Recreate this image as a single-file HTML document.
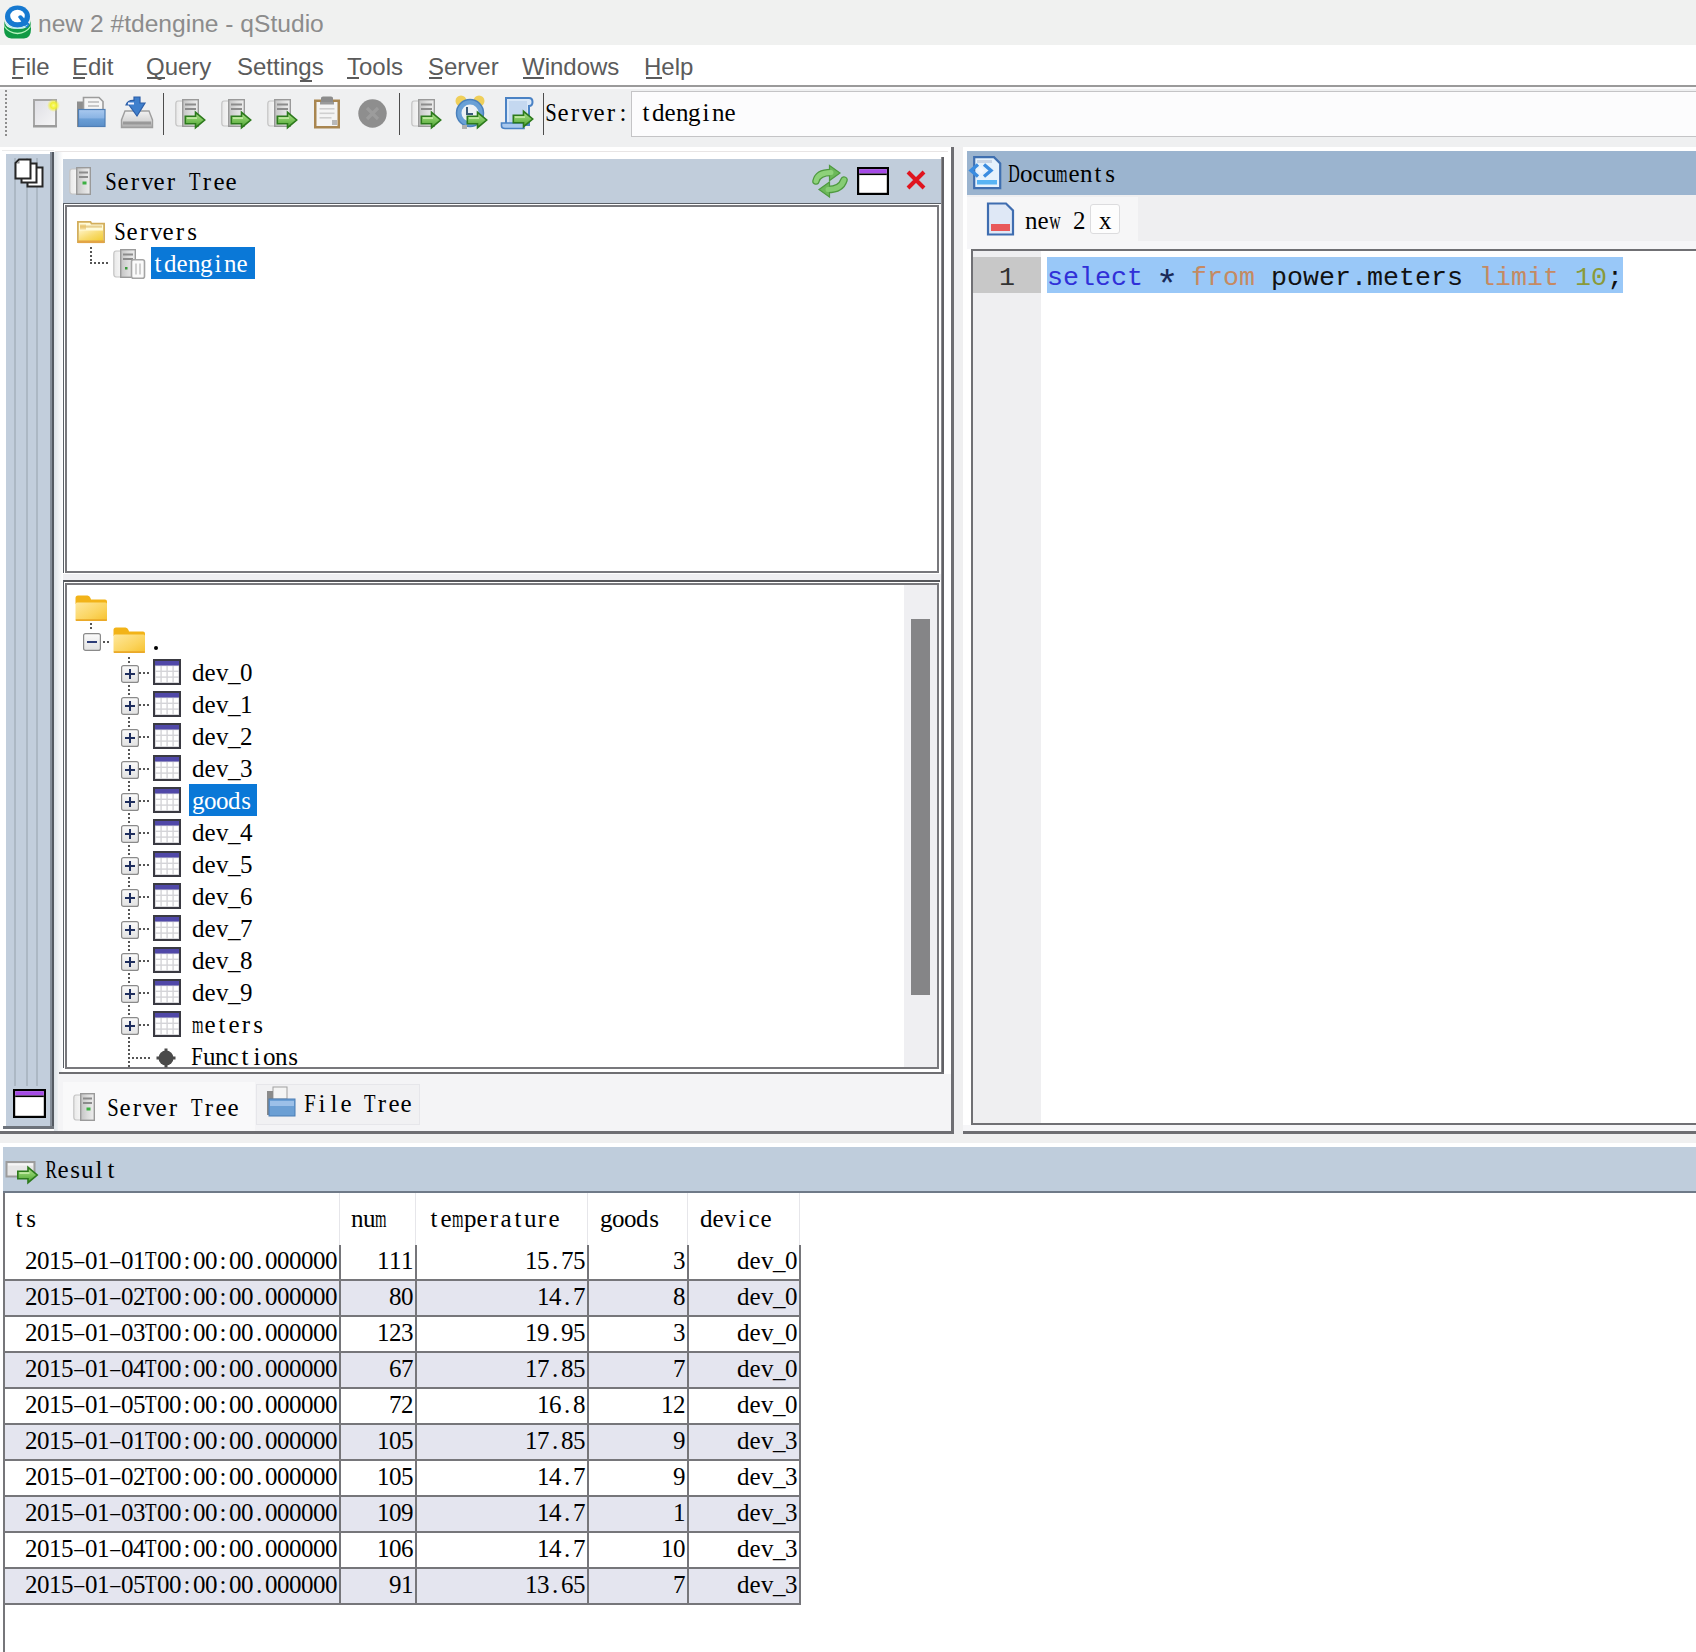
<!DOCTYPE html><html><head><meta charset="utf-8"><style>
html,body{margin:0;padding:0;}
body{width:1696px;height:1652px;position:relative;overflow:hidden;background:#ffffff;}
body div, body svg{position:absolute;box-sizing:border-box;}
.sans{font-family:"Liberation Sans",sans-serif;font-size:24px;line-height:28px;white-space:pre;}
.ss{font-family:"Liberation Serif",serif;font-size:25px;line-height:28px;white-space:pre;color:#000;}
.ss b{font-weight:normal;}
.w{display:inline-block;width:12px;text-align:center;}
.n{display:inline-block;}
.code{font-family:"Liberation Mono",monospace;font-size:26.667px;line-height:32px;white-space:pre;}
</style></head><body>

<svg width="0" height="0" style="position:absolute;left:0;top:0"><defs>
<linearGradient id="gArrow" x1="0" y1="0" x2="0" y2="1"><stop offset="0" stop-color="#b2e08e"/><stop offset=".55" stop-color="#78c258"/><stop offset="1" stop-color="#4c9e34"/></linearGradient>
<linearGradient id="gGhost" x1="0" y1="0" x2="1" y2="0"><stop offset="0" stop-color="#e8e8e8"/><stop offset="1" stop-color="#f8f8f8"/></linearGradient>
<linearGradient id="gSrv" x1="0" y1="0" x2="1" y2="0"><stop offset="0" stop-color="#c4c4c4"/><stop offset=".5" stop-color="#dcdcdc"/><stop offset="1" stop-color="#eeeeee"/></linearGradient>
<linearGradient id="gNew" x1="0" y1="0" x2="1" y2="1"><stop offset="0" stop-color="#dedee4"/><stop offset="1" stop-color="#f6f6f6"/></linearGradient>
<radialGradient id="gGlow"><stop offset="0" stop-color="#fafa90"/><stop offset=".45" stop-color="#f0f030"/><stop offset="1" stop-color="#f4f050" stop-opacity="0"/></radialGradient>
<linearGradient id="gFold" x1="0" y1="0" x2="0" y2="1"><stop offset="0" stop-color="#a9c9ef"/><stop offset=".5" stop-color="#8ab4e4"/><stop offset=".55" stop-color="#6a9ed6"/><stop offset="1" stop-color="#5b8fc8"/></linearGradient>
<linearGradient id="gTray" x1="0" y1="0" x2="0" y2="1"><stop offset="0" stop-color="#f2f2f2"/><stop offset=".6" stop-color="#d6d6d6"/><stop offset="1" stop-color="#a8a8a8"/></linearGradient>
<linearGradient id="gYel" x1="0" y1="0" x2="1" y2="1"><stop offset="0" stop-color="#fff2c0"/><stop offset=".5" stop-color="#f8dc70"/><stop offset="1" stop-color="#f2cc30"/></linearGradient>
<linearGradient id="gFolder" x1="0" y1="0" x2="1" y2="1"><stop offset="0" stop-color="#fee79c"/><stop offset=".6" stop-color="#fbd45e"/><stop offset="1" stop-color="#f6c12e"/></linearGradient>
<linearGradient id="gHdr" x1="0" y1="0" x2="0" y2="1"><stop offset="0" stop-color="#fbfbfb"/><stop offset="1" stop-color="#e2e2e2"/></linearGradient>
</defs></svg>
<div style="left:0px;top:0px;width:1696px;height:45px;background:#f0f1f0;"></div>
<svg style="left:0px;top:0px" width="40" height="44" viewBox="0 0 40 44"><path d="M4 26 Q17.5 37 31 26 L31 29 Q31 38 24 38.5 H11.5 Q4 38 4 29 Z" fill="#109a45"/>
<path d="M4 20 Q4 31 17.5 32 Q31 31 31 20 Q31 29 17.5 29 Q4 29 4 20 Z" fill="#139c48"/>
<path d="M4.5 20 Q5 30 17.5 31 Q30 30 30.5 20 L30.5 26 Q29 33 17.5 33.5 Q6 33 4.5 26 Z" fill="#139c48"/>
<path d="M4.5 26.5 Q9 33 17.5 33.5 Q26 33 30.5 26.5" fill="none" stroke="#b8f5c0" stroke-width="1.3"/>
<ellipse cx="17.5" cy="16.5" rx="12.5" ry="11" fill="#1679d0"/>
<ellipse cx="17.5" cy="16" rx="7.3" ry="6.3" fill="#ffffff"/>
<path d="M18 17 Q19 14.5 21.5 15.5 L29.5 24 Q28.5 27.5 26 28 Z" fill="#1679d0"/>
<path d="M5.5 22.5 Q9 28 17.5 28.5 Q24 28.5 27.5 25" fill="none" stroke="#a8f0f0" stroke-width="1"/></svg>
<div class="sans" style="left:38px;top:10px;color:#8c8c8c;font-size:24.6px;">new 2 #tdengine - qStudio</div>
<div style="left:0px;top:45px;width:1696px;height:40px;background:#ffffff;"></div>
<div style="left:0px;top:85px;width:1696px;height:2px;background:#9a9a9a;"></div>
<div class="sans" style="left:11px;top:53px;color:#5b5b5b;">File</div>
<div class="sans" style="left:72px;top:53px;color:#5b5b5b;">Edit</div>
<div class="sans" style="left:146px;top:53px;color:#5b5b5b;">Query</div>
<div class="sans" style="left:237px;top:53px;color:#5b5b5b;">Settings</div>
<div class="sans" style="left:347px;top:53px;color:#5b5b5b;">Tools</div>
<div class="sans" style="left:428px;top:53px;color:#5b5b5b;">Server</div>
<div class="sans" style="left:522px;top:53px;color:#5b5b5b;">Windows</div>
<div class="sans" style="left:644px;top:53px;color:#5b5b5b;">Help</div>
<div style="left:12px;top:77px;width:11px;height:2px;background:#5b5b5b;"></div>
<div style="left:73px;top:77px;width:12px;height:2px;background:#5b5b5b;"></div>
<div style="left:147px;top:77px;width:18px;height:2px;background:#5b5b5b;"></div>
<div style="left:300px;top:80px;width:12px;height:2px;background:#5b5b5b;"></div>
<div style="left:347px;top:77px;width:12px;height:2px;background:#5b5b5b;"></div>
<div style="left:429px;top:77px;width:13px;height:2px;background:#5b5b5b;"></div>
<div style="left:523px;top:77px;width:21px;height:2px;background:#5b5b5b;"></div>
<div style="left:646px;top:77px;width:16px;height:2px;background:#5b5b5b;"></div>
<div style="left:0px;top:87px;width:1696px;height:60px;background:#eff0f1;"></div>
<div style="left:0px;top:87px;width:1696px;height:2px;background:#fbfbfc;"></div>
<div style="left:5px;top:90px;width:2px;height:2px;background:#8e8e8e;"></div>
<div style="left:5px;top:94px;width:2px;height:2px;background:#8e8e8e;"></div>
<div style="left:5px;top:98px;width:2px;height:2px;background:#8e8e8e;"></div>
<div style="left:5px;top:102px;width:2px;height:2px;background:#8e8e8e;"></div>
<div style="left:5px;top:106px;width:2px;height:2px;background:#8e8e8e;"></div>
<div style="left:5px;top:110px;width:2px;height:2px;background:#8e8e8e;"></div>
<div style="left:5px;top:114px;width:2px;height:2px;background:#8e8e8e;"></div>
<div style="left:5px;top:118px;width:2px;height:2px;background:#8e8e8e;"></div>
<div style="left:5px;top:122px;width:2px;height:2px;background:#8e8e8e;"></div>
<div style="left:5px;top:126px;width:2px;height:2px;background:#8e8e8e;"></div>
<div style="left:5px;top:130px;width:2px;height:2px;background:#8e8e8e;"></div>
<div style="left:5px;top:134px;width:2px;height:2px;background:#8e8e8e;"></div>
<div style="left:163px;top:93px;width:1px;height:42px;background:#4c4c4c;"></div>
<div style="left:399px;top:93px;width:1px;height:42px;background:#4c4c4c;"></div>
<div style="left:543px;top:93px;width:1px;height:42px;background:#4c4c4c;"></div>
<div style="left:631px;top:91px;width:1070px;height:46px;background:#fcfcfd;border:1px solid #c4c4c6;"></div>
<div class="ss" style="left:545px;top:99px;"><b class="w"><b class="n" style="width:13.90px;margin-left:-0.95px;transform:scaleX(0.827)">S</b></b><b class="w">e</b><b class="w">r</b><b class="w">v</b><b class="w">e</b><b class="w">r</b><b class="w">:</b></div>
<div class="ss" style="left:640px;top:99px;"><b class="w">t</b><b class="w">d</b><b class="w">e</b><b class="w">n</b><b class="w">g</b><b class="w">i</b><b class="w">n</b><b class="w">e</b></div>
<svg style="left:32px;top:97px" width="30" height="32" viewBox="0 0 30 32"><rect x="2" y="3" width="22" height="26" fill="url(#gNew)" stroke="#a6a6a6" stroke-width="2"/><rect x="1" y="28" width="24" height="2.5" fill="#9c9c9c"/><circle cx="21.5" cy="8.5" r="6.5" fill="url(#gGlow)"/></svg>
<svg style="left:76px;top:96px" width="32" height="32" viewBox="0 0 32 32"><rect x="1" y="5.5" width="7" height="25.5" fill="#8e8e8e"/><path d="M7.5 1.5 H23 L27 5.5 V14 H7.5 Z" fill="#f6f6f6" stroke="#9c9c9c" stroke-width="1.6"/><rect x="12" y="5" width="11" height="2" fill="#c8c8c8"/><rect x="12" y="9" width="11" height="2" fill="#c8c8c8"/><rect x="2.5" y="13.5" width="26.5" height="17" fill="url(#gFold)" stroke="#4f7fb6" stroke-width="1.2"/></svg>
<svg style="left:120px;top:96px" width="34" height="34" viewBox="0 0 34 34"><path d="M5 15 H29 L32.5 24 V31.5 H1.5 V24 Z" fill="url(#gTray)" stroke="#9e9e9e" stroke-width="1.4"/><rect x="3" y="25.5" width="28" height="3" fill="#8a8a8a" opacity=".75"/><path d="M6 9 Q8 4 14 4.5 V1 L20 1 V7 H25 L17 20 L9 9 Z" fill="#3f7fcc" stroke="#2c5ea8" stroke-width="1.2"/><rect x="8" y="6.5" width="6" height="2" fill="#f4f4ff"/></svg>
<svg style="left:174px;top:98px" width="32" height="32" viewBox="0 0 32 32"><path d="M4 3 H10 V28 H4 Q1.8 28 1.8 25 V6 Q1.8 3 4 3 Z" fill="url(#gGhost)" stroke="#c4c4c4" stroke-width="1.2"/><rect x="8.7" y="1.7" width="15.6" height="26.6" fill="url(#gSrv)" stroke="#9a9a9a" stroke-width="1.4"/><rect x="11" y="5.5" width="11" height="2" fill="#8c8c8c"/><rect x="11" y="10" width="11" height="2" fill="#8c8c8c"/><g transform="translate(10.5,13.5) scale(1.0)"><path d="M0.8 4.8 H11 V0.8 L20.2 8.5 L11 16.2 V12.2 H0.8 Z" fill="url(#gArrow)" stroke="#2c7a1c" stroke-width="1.6" stroke-linejoin="miter"/><path d="M2.5 6.6 H12.5" stroke="#c4eaa8" stroke-width="1.6"/></g></svg>
<svg style="left:220px;top:98px" width="32" height="32" viewBox="0 0 32 32"><path d="M4 3 H10 V28 H4 Q1.8 28 1.8 25 V6 Q1.8 3 4 3 Z" fill="url(#gGhost)" stroke="#c4c4c4" stroke-width="1.2"/><rect x="8.7" y="1.7" width="15.6" height="26.6" fill="url(#gSrv)" stroke="#9a9a9a" stroke-width="1.4"/><rect x="11" y="5.5" width="11" height="2" fill="#8c8c8c"/><rect x="11" y="10" width="11" height="2" fill="#8c8c8c"/><g transform="translate(10.5,13.5) scale(1.0)"><path d="M0.8 4.8 H11 V0.8 L20.2 8.5 L11 16.2 V12.2 H0.8 Z" fill="url(#gArrow)" stroke="#2c7a1c" stroke-width="1.6" stroke-linejoin="miter"/><path d="M2.5 6.6 H12.5" stroke="#c4eaa8" stroke-width="1.6"/></g></svg>
<svg style="left:266px;top:98px" width="32" height="32" viewBox="0 0 32 32"><path d="M4 3 H10 V28 H4 Q1.8 28 1.8 25 V6 Q1.8 3 4 3 Z" fill="url(#gGhost)" stroke="#c4c4c4" stroke-width="1.2"/><rect x="8.7" y="1.7" width="15.6" height="26.6" fill="url(#gSrv)" stroke="#9a9a9a" stroke-width="1.4"/><rect x="11" y="5.5" width="11" height="2" fill="#8c8c8c"/><rect x="11" y="10" width="11" height="2" fill="#8c8c8c"/><g transform="translate(10.5,13.5) scale(1.0)"><path d="M0.8 4.8 H11 V0.8 L20.2 8.5 L11 16.2 V12.2 H0.8 Z" fill="url(#gArrow)" stroke="#2c7a1c" stroke-width="1.6" stroke-linejoin="miter"/><path d="M2.5 6.6 H12.5" stroke="#c4eaa8" stroke-width="1.6"/></g></svg>
<svg style="left:312px;top:96px" width="30" height="34" viewBox="0 0 30 34"><rect x="2" y="3.5" width="26" height="29" fill="#a98650" /><rect x="4.5" y="6" width="21" height="24" fill="#f4f4f4"/><path d="M9 2 Q9 0.5 11 0.5 H19 Q21 0.5 21 2 V6 H9 Z" fill="#8c8c8c"/><rect x="8" y="6" width="14" height="2.5" fill="#9a9a9a"/><rect x="7.5" y="12" width="15" height="1.6" fill="#cfcfcf"/><rect x="7.5" y="16.5" width="15" height="1.6" fill="#cfcfcf"/><rect x="7.5" y="21" width="12" height="1.6" fill="#cfcfcf"/><rect x="20" y="24" width="5" height="5" fill="#b8b8b8"/></svg>
<svg style="left:358px;top:98px" width="30" height="32" viewBox="0 0 30 32"><circle cx="14.5" cy="15.5" r="14.2" fill="#8e8e8e"/><path d="M9 10 L20 21 M20 10 L9 21" stroke="#9c9c9c" stroke-width="3.2"/></svg>
<svg style="left:410px;top:98px" width="32" height="32" viewBox="0 0 32 32"><path d="M4 3 H10 V28 H4 Q1.8 28 1.8 25 V6 Q1.8 3 4 3 Z" fill="url(#gGhost)" stroke="#c4c4c4" stroke-width="1.2"/><rect x="8.7" y="1.7" width="15.6" height="26.6" fill="url(#gSrv)" stroke="#9a9a9a" stroke-width="1.4"/><rect x="11" y="5.5" width="11" height="2" fill="#8c8c8c"/><rect x="11" y="10" width="11" height="2" fill="#8c8c8c"/><g transform="translate(10.5,13.5) scale(1.0)"><path d="M0.8 4.8 H11 V0.8 L20.2 8.5 L11 16.2 V12.2 H0.8 Z" fill="url(#gArrow)" stroke="#2c7a1c" stroke-width="1.6" stroke-linejoin="miter"/><path d="M2.5 6.6 H12.5" stroke="#c4eaa8" stroke-width="1.6"/></g></svg>
<svg style="left:454px;top:95px" width="34" height="35" viewBox="0 0 34 35"><circle cx="7" cy="6" r="5.5" fill="#efcf5a"/><circle cx="25" cy="6" r="5.5" fill="#efcf5a"/><circle cx="16" cy="18" r="13.5" fill="#6aa0d6" stroke="#4a80bc" stroke-width="1.5"/><circle cx="16" cy="18" r="8.5" fill="#eef2f6"/><path d="M13 12 v7 h6" stroke="#3a5a7a" stroke-width="2" fill="none"/><rect x="8" y="30" width="5" height="4" fill="#b0b0b0"/><g transform="translate(12.5,16.5) scale(1.0)"><path d="M0.8 4.8 H11 V0.8 L20.2 8.5 L11 16.2 V12.2 H0.8 Z" fill="url(#gArrow)" stroke="#2c7a1c" stroke-width="1.6" stroke-linejoin="miter"/><path d="M2.5 6.6 H12.5" stroke="#c4eaa8" stroke-width="1.6"/></g></svg>
<svg style="left:500px;top:96px" width="34" height="34" viewBox="0 0 34 34"><path d="M6 2 H29 Q32.5 2 32.5 6 Q32.5 10 29 10 V29 H6 Z" fill="#dae8f8" stroke="#4a82c4" stroke-width="2"/><path d="M9 5 H27 V27 H9 Z" fill="#c4d8f0"/><path d="M1.5 27 H24 V32.5 H5 Q1.5 32.5 1.5 30 Z" fill="#a8c8ee" stroke="#4a82c4" stroke-width="1.6"/><g transform="translate(12.5,14.5) scale(1.0)"><path d="M0.8 4.8 H11 V0.8 L20.2 8.5 L11 16.2 V12.2 H0.8 Z" fill="url(#gArrow)" stroke="#2c7a1c" stroke-width="1.6" stroke-linejoin="miter"/><path d="M2.5 6.6 H12.5" stroke="#c4eaa8" stroke-width="1.6"/></g></svg>
<div style="left:0px;top:147px;width:954px;height:987px;background:#ffffff;"></div>
<div style="left:954px;top:147px;width:9px;height:987px;background:#efeff0;"></div>
<div style="left:963px;top:147px;width:733px;height:987px;background:#ffffff;"></div>
<div style="left:2px;top:150px;width:52px;height:1px;background:#ebebeb;"></div>
<div style="left:54px;top:152px;width:9px;height:980px;background:linear-gradient(to right,#dde3e8,#ffffff);"></div>
<div style="left:55px;top:151px;width:893px;height:1px;background:#e8e5e5;"></div>
<div style="left:6px;top:154px;width:44px;height:972px;background:#c2cedc;"></div>
<div style="left:14px;top:158px;width:2px;height:928px;background:#acb8c4;"></div>
<div style="left:26px;top:158px;width:2px;height:928px;background:#acb8c4;"></div>
<div style="left:36px;top:158px;width:2px;height:928px;background:#acb8c4;"></div>
<div style="left:50px;top:152px;width:2px;height:977px;background:#868f9a;"></div>
<div style="left:52px;top:152px;width:2px;height:977px;background:#545a62;"></div>
<div style="left:3px;top:1126px;width:51px;height:3px;background:#6d737b;"></div>
<svg style="left:14px;top:158px" width="32" height="32" viewBox="0 0 32 32"><rect x="13.5" y="9.5" width="15" height="19" fill="#fff" stroke="#262626" stroke-width="2"/><rect x="7.5" y="5.5" width="15" height="19" fill="#fff" stroke="#262626" stroke-width="2"/><path d="M1.5 5 L5 1.5 H16.5 V20.5 H1.5 Z" fill="#fff" stroke="#262626" stroke-width="2"/><path d="M2.5 5.5 L5.5 2.5 V5.5 Z" fill="#8a8a8a"/></svg>
<svg style="left:13px;top:1089px" width="33" height="29" viewBox="0 0 33 29"><rect x="1.1" y="1.1" width="30.8" height="26.8" fill="#fff" stroke="#000" stroke-width="2.2"/><rect x="2.2" y="2.2" width="28.6" height="4.3" fill="#a54ae6"/><rect x="2.2" y="6.5" width="28.6" height="1.6" fill="#000"/></svg>
<div style="left:951px;top:147px;width:3px;height:987px;background:#6e6e72;"></div>
<div style="left:0px;top:1131px;width:954px;height:3px;background:#6e6e72;"></div>
<div style="left:63px;top:159px;width:878px;height:44px;background:#c1cddb;"></div>
<div style="left:941px;top:157px;width:1px;height:917px;background:#8a8a8e;"></div>
<div style="left:942px;top:157px;width:2px;height:917px;background:#626266;"></div>
<svg style="left:68px;top:166px" width="26" height="30" viewBox="0 0 26 30"><path d="M4 3 H10 V28 H4 Q1.8 28 1.8 25 V6 Q1.8 3 4 3 Z" fill="url(#gGhost)" stroke="#c4c4c4" stroke-width="1.2"/><rect x="8.7" y="1.7" width="13.6" height="26.6" fill="url(#gSrv)" stroke="#9a9a9a" stroke-width="1.4"/><rect x="11" y="5.5" width="9" height="2" fill="#8c8c8c"/><rect x="11" y="10" width="9" height="2" fill="#8c8c8c"/><rect x="14.5" y="15.5" width="4" height="3" fill="#3cb043"/></svg>
<div class="ss" style="left:105px;top:168px;"><b class="w"><b class="n" style="width:13.90px;margin-left:-0.95px;transform:scaleX(0.827)">S</b></b><b class="w">e</b><b class="w">r</b><b class="w">v</b><b class="w">e</b><b class="w">r</b><b class="w"> </b><b class="w"><b class="n" style="width:15.27px;margin-left:-1.64px;transform:scaleX(0.753)">T</b></b><b class="w">r</b><b class="w">e</b><b class="w">e</b></div>
<svg style="left:812px;top:164px" width="36" height="34" viewBox="0 0 36 34"><path d="M4 17 Q6 8.5 19 8.5" fill="none" stroke="#4f9a40" stroke-width="7.5" stroke-linecap="round"/><path d="M32 16 Q29 25.5 16 25.5" fill="none" stroke="#4f9a40" stroke-width="7.5" stroke-linecap="round"/><path d="M17.5 1.5 L28 9 L17.5 16.5 Z" fill="#6cb85a" stroke="#4f9a40" stroke-width="1.2"/><path d="M17.5 18 L7 25.5 L17.5 33 Z" fill="#6cb85a" stroke="#4f9a40" stroke-width="1.2"/><path d="M4 17 Q6 8.5 19 8.5" fill="none" stroke="#8ed27a" stroke-width="5" stroke-linecap="round"/><path d="M32 16 Q29 25.5 16 25.5" fill="none" stroke="#86cc74" stroke-width="5" stroke-linecap="round"/></svg>
<svg style="left:857px;top:167px" width="32" height="28" viewBox="0 0 32 28"><rect x="1.1" y="1.1" width="29.8" height="25.8" fill="#fff" stroke="#000" stroke-width="2.2"/><rect x="2.2" y="2.2" width="27.6" height="4.3" fill="#a54ae6"/><rect x="2.2" y="6.5" width="27.6" height="1.6" fill="#000"/></svg>
<svg style="left:905px;top:169px" width="22" height="22" viewBox="0 0 22 22"><path d="M3 3 L19 19 M19 3 L3 19" stroke="#e0141e" stroke-width="4"/></svg>
<div style="left:63px;top:203px;width:878px;height:370px;background:#ffffff;"></div>
<div style="left:63px;top:203px;width:878px;height:1px;background:#5a5f66;"></div>
<div style="left:63px;top:203px;width:1px;height:370px;background:#5a5f66;"></div>
<div style="left:65px;top:205px;width:874px;height:2px;background:#78787c;"></div>
<div style="left:65px;top:205px;width:2px;height:368px;background:#78787c;"></div>
<div style="left:937px;top:205px;width:2px;height:368px;background:#78787c;"></div>
<div style="left:65px;top:571px;width:874px;height:2px;background:#78787c;"></div>
<div style="left:63px;top:574px;width:878px;height:6px;background:#efeff2;"></div>
<svg style="left:76px;top:220px" width="30" height="24" viewBox="0 0 30 24"><path d="M1.9 1.9 H14.5 L15.5 3.6 H28.1 V22.1 H1.9 Z" fill="#fffbd8" stroke="#d3ae5c" stroke-width="1.8"/><rect x="4" y="5.5" width="22" height="2.2" fill="#e8d090"/><rect x="4" y="4.5" width="6" height="5" fill="#e8c060" opacity=".6"/><path d="M3 10.5 H27 V21 H3 Z" fill="url(#gYel)"/><rect x="2" y="20.5" width="26" height="2.6" fill="#e2a446"/></svg>
<div class="ss" style="left:114px;top:218px;"><b class="w"><b class="n" style="width:13.90px;margin-left:-0.95px;transform:scaleX(0.827)">S</b></b><b class="w">e</b><b class="w">r</b><b class="w">v</b><b class="w">e</b><b class="w">r</b><b class="w">s</b></div>
<div style="left:90px;top:247px;width:2px;height:2px;background:#555;"></div>
<div style="left:90px;top:251px;width:2px;height:2px;background:#555;"></div>
<div style="left:90px;top:255px;width:2px;height:2px;background:#555;"></div>
<div style="left:90px;top:259px;width:2px;height:2px;background:#555;"></div>
<div style="left:90px;top:262px;width:2px;height:2px;background:#555;"></div>
<div style="left:94px;top:262px;width:2px;height:2px;background:#555;"></div>
<div style="left:98px;top:262px;width:2px;height:2px;background:#555;"></div>
<div style="left:102px;top:262px;width:2px;height:2px;background:#555;"></div>
<div style="left:106px;top:262px;width:2px;height:2px;background:#555;"></div>
<svg style="left:112px;top:248px" width="34" height="32" viewBox="0 0 34 32"><path d="M4 3 H10 V29 H4 Q1.8 29 1.8 26 V6 Q1.8 3 4 3 Z" fill="url(#gGhost)" stroke="#c4c4c4" stroke-width="1.2"/><rect x="8.7" y="1.7" width="14.6" height="27.6" fill="url(#gSrv)" stroke="#9a9a9a" stroke-width="1.4"/><rect x="11" y="5.5" width="10" height="2" fill="#8c8c8c"/><rect x="11" y="10" width="10" height="2" fill="#8c8c8c"/><rect x="19.5" y="11.8" width="13" height="18.5" rx="2" fill="#fafafa" stroke="#a4a4a4" stroke-width="1.6"/><rect x="23" y="15.5" width="2" height="11" fill="#cfcfcf"/><rect x="27" y="15.5" width="2" height="11" fill="#cfcfcf"/><rect x="13" y="19" width="2.5" height="2.5" fill="#3a9a3a"/></svg>
<div style="left:151px;top:247px;width:104px;height:32px;background:#0a78d7;"></div>
<div class="ss" style="left:152px;top:250px;color:#fff;"><b class="w">t</b><b class="w">d</b><b class="w">e</b><b class="w">n</b><b class="w">g</b><b class="w">i</b><b class="w">n</b><b class="w">e</b></div>
<div style="left:63px;top:580px;width:878px;height:494px;background:#ffffff;"></div>
<div style="left:63px;top:580px;width:877px;height:2px;background:#55565a;"></div>
<div style="left:63px;top:580px;width:1px;height:488px;background:#5a5f66;"></div>
<div style="left:65px;top:583px;width:874px;height:2px;background:#78787c;"></div>
<div style="left:65px;top:583px;width:2px;height:486px;background:#78787c;"></div>
<div style="left:937px;top:583px;width:2px;height:486px;background:#78787c;"></div>
<div style="left:65px;top:1067px;width:874px;height:2px;background:#78787c;"></div>
<div style="left:59px;top:1072px;width:885px;height:2px;background:#6e6e72;"></div>
<div style="left:904px;top:585px;width:33px;height:482px;background:#efeff2;"></div>
<div style="left:911px;top:619px;width:19px;height:376px;background:#858587;"></div>
<svg style="left:75px;top:595px" width="33" height="27" viewBox="0 0 33 27"><path d="M0.5 3 Q0.5 0.5 3 0.5 H12.5 Q14.5 0.5 15.5 3 L16 4.5 H30 Q32 4.5 32 6.5 V9 H0.5 Z" fill="#f2b318"/><rect x="0.5" y="7.5" width="31.5" height="18.5" rx="1.5" fill="url(#gFolder)"/><rect x="0.8" y="24.2" width="31" height="1.8" fill="#eaa928"/></svg>
<div style="left:90px;top:623px;width:2px;height:2px;background:#555;"></div>
<div style="left:90px;top:627px;width:2px;height:2px;background:#555;"></div>
<svg style="left:83px;top:633px" width="18" height="18" viewBox="0 0 18 18"><rect x=".6" y=".6" width="16.8" height="16.8" rx="2" fill="url(#gHdr)" stroke="#8a8a8a" stroke-width="1.2"/><rect x="4" y="8" width="10" height="2" fill="#2e3e78"/></svg>
<div style="left:103px;top:641px;width:2px;height:2px;background:#555;"></div>
<div style="left:107px;top:641px;width:2px;height:2px;background:#555;"></div>
<svg style="left:113px;top:627px" width="33" height="27" viewBox="0 0 33 27"><path d="M0.5 3 Q0.5 0.5 3 0.5 H12.5 Q14.5 0.5 15.5 3 L16 4.5 H30 Q32 4.5 32 6.5 V9 H0.5 Z" fill="#f2b318"/><rect x="0.5" y="7.5" width="31.5" height="18.5" rx="1.5" fill="url(#gFolder)"/><rect x="0.8" y="24.2" width="31" height="1.8" fill="#eaa928"/></svg>
<div style="left:154px;top:646px;width:4px;height:4px;background:#000;border-radius:2px;"></div>
<div style="left:128px;top:657px;width:2px;height:2px;background:#555;"></div>
<div style="left:128px;top:661px;width:2px;height:2px;background:#555;"></div>
<div style="left:128px;top:665px;width:2px;height:2px;background:#555;"></div>
<div style="left:128px;top:669px;width:2px;height:2px;background:#555;"></div>
<div style="left:128px;top:673px;width:2px;height:2px;background:#555;"></div>
<div style="left:128px;top:677px;width:2px;height:2px;background:#555;"></div>
<div style="left:128px;top:681px;width:2px;height:2px;background:#555;"></div>
<div style="left:128px;top:685px;width:2px;height:2px;background:#555;"></div>
<div style="left:128px;top:689px;width:2px;height:2px;background:#555;"></div>
<div style="left:128px;top:693px;width:2px;height:2px;background:#555;"></div>
<div style="left:128px;top:697px;width:2px;height:2px;background:#555;"></div>
<div style="left:128px;top:701px;width:2px;height:2px;background:#555;"></div>
<div style="left:128px;top:705px;width:2px;height:2px;background:#555;"></div>
<div style="left:128px;top:709px;width:2px;height:2px;background:#555;"></div>
<div style="left:128px;top:713px;width:2px;height:2px;background:#555;"></div>
<div style="left:128px;top:717px;width:2px;height:2px;background:#555;"></div>
<div style="left:128px;top:721px;width:2px;height:2px;background:#555;"></div>
<div style="left:128px;top:725px;width:2px;height:2px;background:#555;"></div>
<div style="left:128px;top:729px;width:2px;height:2px;background:#555;"></div>
<div style="left:128px;top:733px;width:2px;height:2px;background:#555;"></div>
<div style="left:128px;top:737px;width:2px;height:2px;background:#555;"></div>
<div style="left:128px;top:741px;width:2px;height:2px;background:#555;"></div>
<div style="left:128px;top:745px;width:2px;height:2px;background:#555;"></div>
<div style="left:128px;top:749px;width:2px;height:2px;background:#555;"></div>
<div style="left:128px;top:753px;width:2px;height:2px;background:#555;"></div>
<div style="left:128px;top:757px;width:2px;height:2px;background:#555;"></div>
<div style="left:128px;top:761px;width:2px;height:2px;background:#555;"></div>
<div style="left:128px;top:765px;width:2px;height:2px;background:#555;"></div>
<div style="left:128px;top:769px;width:2px;height:2px;background:#555;"></div>
<div style="left:128px;top:773px;width:2px;height:2px;background:#555;"></div>
<div style="left:128px;top:777px;width:2px;height:2px;background:#555;"></div>
<div style="left:128px;top:781px;width:2px;height:2px;background:#555;"></div>
<div style="left:128px;top:785px;width:2px;height:2px;background:#555;"></div>
<div style="left:128px;top:789px;width:2px;height:2px;background:#555;"></div>
<div style="left:128px;top:793px;width:2px;height:2px;background:#555;"></div>
<div style="left:128px;top:797px;width:2px;height:2px;background:#555;"></div>
<div style="left:128px;top:801px;width:2px;height:2px;background:#555;"></div>
<div style="left:128px;top:805px;width:2px;height:2px;background:#555;"></div>
<div style="left:128px;top:809px;width:2px;height:2px;background:#555;"></div>
<div style="left:128px;top:813px;width:2px;height:2px;background:#555;"></div>
<div style="left:128px;top:817px;width:2px;height:2px;background:#555;"></div>
<div style="left:128px;top:821px;width:2px;height:2px;background:#555;"></div>
<div style="left:128px;top:825px;width:2px;height:2px;background:#555;"></div>
<div style="left:128px;top:829px;width:2px;height:2px;background:#555;"></div>
<div style="left:128px;top:833px;width:2px;height:2px;background:#555;"></div>
<div style="left:128px;top:837px;width:2px;height:2px;background:#555;"></div>
<div style="left:128px;top:841px;width:2px;height:2px;background:#555;"></div>
<div style="left:128px;top:845px;width:2px;height:2px;background:#555;"></div>
<div style="left:128px;top:849px;width:2px;height:2px;background:#555;"></div>
<div style="left:128px;top:853px;width:2px;height:2px;background:#555;"></div>
<div style="left:128px;top:857px;width:2px;height:2px;background:#555;"></div>
<div style="left:128px;top:861px;width:2px;height:2px;background:#555;"></div>
<div style="left:128px;top:865px;width:2px;height:2px;background:#555;"></div>
<div style="left:128px;top:869px;width:2px;height:2px;background:#555;"></div>
<div style="left:128px;top:873px;width:2px;height:2px;background:#555;"></div>
<div style="left:128px;top:877px;width:2px;height:2px;background:#555;"></div>
<div style="left:128px;top:881px;width:2px;height:2px;background:#555;"></div>
<div style="left:128px;top:885px;width:2px;height:2px;background:#555;"></div>
<div style="left:128px;top:889px;width:2px;height:2px;background:#555;"></div>
<div style="left:128px;top:893px;width:2px;height:2px;background:#555;"></div>
<div style="left:128px;top:897px;width:2px;height:2px;background:#555;"></div>
<div style="left:128px;top:901px;width:2px;height:2px;background:#555;"></div>
<div style="left:128px;top:905px;width:2px;height:2px;background:#555;"></div>
<div style="left:128px;top:909px;width:2px;height:2px;background:#555;"></div>
<div style="left:128px;top:913px;width:2px;height:2px;background:#555;"></div>
<div style="left:128px;top:917px;width:2px;height:2px;background:#555;"></div>
<div style="left:128px;top:921px;width:2px;height:2px;background:#555;"></div>
<div style="left:128px;top:925px;width:2px;height:2px;background:#555;"></div>
<div style="left:128px;top:929px;width:2px;height:2px;background:#555;"></div>
<div style="left:128px;top:933px;width:2px;height:2px;background:#555;"></div>
<div style="left:128px;top:937px;width:2px;height:2px;background:#555;"></div>
<div style="left:128px;top:941px;width:2px;height:2px;background:#555;"></div>
<div style="left:128px;top:945px;width:2px;height:2px;background:#555;"></div>
<div style="left:128px;top:949px;width:2px;height:2px;background:#555;"></div>
<div style="left:128px;top:953px;width:2px;height:2px;background:#555;"></div>
<div style="left:128px;top:957px;width:2px;height:2px;background:#555;"></div>
<div style="left:128px;top:961px;width:2px;height:2px;background:#555;"></div>
<div style="left:128px;top:965px;width:2px;height:2px;background:#555;"></div>
<div style="left:128px;top:969px;width:2px;height:2px;background:#555;"></div>
<div style="left:128px;top:973px;width:2px;height:2px;background:#555;"></div>
<div style="left:128px;top:977px;width:2px;height:2px;background:#555;"></div>
<div style="left:128px;top:981px;width:2px;height:2px;background:#555;"></div>
<div style="left:128px;top:985px;width:2px;height:2px;background:#555;"></div>
<div style="left:128px;top:989px;width:2px;height:2px;background:#555;"></div>
<div style="left:128px;top:993px;width:2px;height:2px;background:#555;"></div>
<div style="left:128px;top:997px;width:2px;height:2px;background:#555;"></div>
<div style="left:128px;top:1001px;width:2px;height:2px;background:#555;"></div>
<div style="left:128px;top:1005px;width:2px;height:2px;background:#555;"></div>
<div style="left:128px;top:1009px;width:2px;height:2px;background:#555;"></div>
<div style="left:128px;top:1013px;width:2px;height:2px;background:#555;"></div>
<div style="left:128px;top:1017px;width:2px;height:2px;background:#555;"></div>
<div style="left:128px;top:1021px;width:2px;height:2px;background:#555;"></div>
<div style="left:128px;top:1025px;width:2px;height:2px;background:#555;"></div>
<div style="left:128px;top:1029px;width:2px;height:2px;background:#555;"></div>
<div style="left:128px;top:1033px;width:2px;height:2px;background:#555;"></div>
<div style="left:128px;top:1037px;width:2px;height:2px;background:#555;"></div>
<div style="left:128px;top:1041px;width:2px;height:2px;background:#555;"></div>
<div style="left:128px;top:1045px;width:2px;height:2px;background:#555;"></div>
<div style="left:128px;top:1049px;width:2px;height:2px;background:#555;"></div>
<div style="left:128px;top:1053px;width:2px;height:2px;background:#555;"></div>
<div style="left:128px;top:1057px;width:2px;height:2px;background:#555;"></div>
<div style="left:128px;top:1061px;width:2px;height:2px;background:#555;"></div>
<div style="left:128px;top:1065px;width:2px;height:2px;background:#555;"></div>
<svg style="left:121px;top:665px" width="18" height="18" viewBox="0 0 18 18"><rect x=".6" y=".6" width="16.8" height="16.8" rx="2" fill="url(#gHdr)" stroke="#8a8a8a" stroke-width="1.2"/><rect x="4" y="8" width="10" height="2" fill="#1e2e5e"/><rect x="8" y="4" width="2" height="10" fill="#1e2e5e"/></svg>
<div style="left:139px;top:672px;width:2px;height:2px;background:#555;"></div>
<div style="left:143px;top:672px;width:2px;height:2px;background:#555;"></div>
<div style="left:147px;top:672px;width:2px;height:2px;background:#555;"></div>
<svg style="left:153px;top:659px" width="28" height="26" viewBox="0 0 28 26"><rect x="1" y="1" width="26" height="24" fill="#d4d4d8" stroke="#3a3a42" stroke-width="2"/><rect x="2" y="2" width="24" height="4.5" fill="#5048a8"/><rect x="2.8" y="7.2" width="4.6" height="4.4" fill="#ffffff"/><rect x="8.8" y="7.2" width="4.6" height="4.4" fill="#ffffff"/><rect x="14.8" y="7.2" width="4.6" height="4.4" fill="#ffffff"/><rect x="20.8" y="7.2" width="4.6" height="4.4" fill="#ffffff"/><rect x="2.8" y="13.0" width="4.6" height="4.4" fill="#ffffff"/><rect x="8.8" y="13.0" width="4.6" height="4.4" fill="#ffffff"/><rect x="14.8" y="13.0" width="4.6" height="4.4" fill="#ffffff"/><rect x="20.8" y="13.0" width="4.6" height="4.4" fill="#ffffff"/><rect x="2.8" y="18.8" width="4.6" height="4.4" fill="#ffffff"/><rect x="8.8" y="18.8" width="4.6" height="4.4" fill="#ffffff"/><rect x="14.8" y="18.8" width="4.6" height="4.4" fill="#ffffff"/><rect x="20.8" y="18.8" width="4.6" height="4.4" fill="#ffffff"/></svg>
<div class="ss" style="left:192px;top:659px;"><b class="w">d</b><b class="w">e</b><b class="w">v</b><b class="w">_</b><b class="w">0</b></div>
<svg style="left:121px;top:697px" width="18" height="18" viewBox="0 0 18 18"><rect x=".6" y=".6" width="16.8" height="16.8" rx="2" fill="url(#gHdr)" stroke="#8a8a8a" stroke-width="1.2"/><rect x="4" y="8" width="10" height="2" fill="#1e2e5e"/><rect x="8" y="4" width="2" height="10" fill="#1e2e5e"/></svg>
<div style="left:139px;top:704px;width:2px;height:2px;background:#555;"></div>
<div style="left:143px;top:704px;width:2px;height:2px;background:#555;"></div>
<div style="left:147px;top:704px;width:2px;height:2px;background:#555;"></div>
<svg style="left:153px;top:691px" width="28" height="26" viewBox="0 0 28 26"><rect x="1" y="1" width="26" height="24" fill="#d4d4d8" stroke="#3a3a42" stroke-width="2"/><rect x="2" y="2" width="24" height="4.5" fill="#5048a8"/><rect x="2.8" y="7.2" width="4.6" height="4.4" fill="#ffffff"/><rect x="8.8" y="7.2" width="4.6" height="4.4" fill="#ffffff"/><rect x="14.8" y="7.2" width="4.6" height="4.4" fill="#ffffff"/><rect x="20.8" y="7.2" width="4.6" height="4.4" fill="#ffffff"/><rect x="2.8" y="13.0" width="4.6" height="4.4" fill="#ffffff"/><rect x="8.8" y="13.0" width="4.6" height="4.4" fill="#ffffff"/><rect x="14.8" y="13.0" width="4.6" height="4.4" fill="#ffffff"/><rect x="20.8" y="13.0" width="4.6" height="4.4" fill="#ffffff"/><rect x="2.8" y="18.8" width="4.6" height="4.4" fill="#ffffff"/><rect x="8.8" y="18.8" width="4.6" height="4.4" fill="#ffffff"/><rect x="14.8" y="18.8" width="4.6" height="4.4" fill="#ffffff"/><rect x="20.8" y="18.8" width="4.6" height="4.4" fill="#ffffff"/></svg>
<div class="ss" style="left:192px;top:691px;"><b class="w">d</b><b class="w">e</b><b class="w">v</b><b class="w">_</b><b class="w">1</b></div>
<svg style="left:121px;top:729px" width="18" height="18" viewBox="0 0 18 18"><rect x=".6" y=".6" width="16.8" height="16.8" rx="2" fill="url(#gHdr)" stroke="#8a8a8a" stroke-width="1.2"/><rect x="4" y="8" width="10" height="2" fill="#1e2e5e"/><rect x="8" y="4" width="2" height="10" fill="#1e2e5e"/></svg>
<div style="left:139px;top:736px;width:2px;height:2px;background:#555;"></div>
<div style="left:143px;top:736px;width:2px;height:2px;background:#555;"></div>
<div style="left:147px;top:736px;width:2px;height:2px;background:#555;"></div>
<svg style="left:153px;top:723px" width="28" height="26" viewBox="0 0 28 26"><rect x="1" y="1" width="26" height="24" fill="#d4d4d8" stroke="#3a3a42" stroke-width="2"/><rect x="2" y="2" width="24" height="4.5" fill="#5048a8"/><rect x="2.8" y="7.2" width="4.6" height="4.4" fill="#ffffff"/><rect x="8.8" y="7.2" width="4.6" height="4.4" fill="#ffffff"/><rect x="14.8" y="7.2" width="4.6" height="4.4" fill="#ffffff"/><rect x="20.8" y="7.2" width="4.6" height="4.4" fill="#ffffff"/><rect x="2.8" y="13.0" width="4.6" height="4.4" fill="#ffffff"/><rect x="8.8" y="13.0" width="4.6" height="4.4" fill="#ffffff"/><rect x="14.8" y="13.0" width="4.6" height="4.4" fill="#ffffff"/><rect x="20.8" y="13.0" width="4.6" height="4.4" fill="#ffffff"/><rect x="2.8" y="18.8" width="4.6" height="4.4" fill="#ffffff"/><rect x="8.8" y="18.8" width="4.6" height="4.4" fill="#ffffff"/><rect x="14.8" y="18.8" width="4.6" height="4.4" fill="#ffffff"/><rect x="20.8" y="18.8" width="4.6" height="4.4" fill="#ffffff"/></svg>
<div class="ss" style="left:192px;top:723px;"><b class="w">d</b><b class="w">e</b><b class="w">v</b><b class="w">_</b><b class="w">2</b></div>
<svg style="left:121px;top:761px" width="18" height="18" viewBox="0 0 18 18"><rect x=".6" y=".6" width="16.8" height="16.8" rx="2" fill="url(#gHdr)" stroke="#8a8a8a" stroke-width="1.2"/><rect x="4" y="8" width="10" height="2" fill="#1e2e5e"/><rect x="8" y="4" width="2" height="10" fill="#1e2e5e"/></svg>
<div style="left:139px;top:768px;width:2px;height:2px;background:#555;"></div>
<div style="left:143px;top:768px;width:2px;height:2px;background:#555;"></div>
<div style="left:147px;top:768px;width:2px;height:2px;background:#555;"></div>
<svg style="left:153px;top:755px" width="28" height="26" viewBox="0 0 28 26"><rect x="1" y="1" width="26" height="24" fill="#d4d4d8" stroke="#3a3a42" stroke-width="2"/><rect x="2" y="2" width="24" height="4.5" fill="#5048a8"/><rect x="2.8" y="7.2" width="4.6" height="4.4" fill="#ffffff"/><rect x="8.8" y="7.2" width="4.6" height="4.4" fill="#ffffff"/><rect x="14.8" y="7.2" width="4.6" height="4.4" fill="#ffffff"/><rect x="20.8" y="7.2" width="4.6" height="4.4" fill="#ffffff"/><rect x="2.8" y="13.0" width="4.6" height="4.4" fill="#ffffff"/><rect x="8.8" y="13.0" width="4.6" height="4.4" fill="#ffffff"/><rect x="14.8" y="13.0" width="4.6" height="4.4" fill="#ffffff"/><rect x="20.8" y="13.0" width="4.6" height="4.4" fill="#ffffff"/><rect x="2.8" y="18.8" width="4.6" height="4.4" fill="#ffffff"/><rect x="8.8" y="18.8" width="4.6" height="4.4" fill="#ffffff"/><rect x="14.8" y="18.8" width="4.6" height="4.4" fill="#ffffff"/><rect x="20.8" y="18.8" width="4.6" height="4.4" fill="#ffffff"/></svg>
<div class="ss" style="left:192px;top:755px;"><b class="w">d</b><b class="w">e</b><b class="w">v</b><b class="w">_</b><b class="w">3</b></div>
<svg style="left:121px;top:793px" width="18" height="18" viewBox="0 0 18 18"><rect x=".6" y=".6" width="16.8" height="16.8" rx="2" fill="url(#gHdr)" stroke="#8a8a8a" stroke-width="1.2"/><rect x="4" y="8" width="10" height="2" fill="#1e2e5e"/><rect x="8" y="4" width="2" height="10" fill="#1e2e5e"/></svg>
<div style="left:139px;top:800px;width:2px;height:2px;background:#555;"></div>
<div style="left:143px;top:800px;width:2px;height:2px;background:#555;"></div>
<div style="left:147px;top:800px;width:2px;height:2px;background:#555;"></div>
<svg style="left:153px;top:787px" width="28" height="26" viewBox="0 0 28 26"><rect x="1" y="1" width="26" height="24" fill="#d4d4d8" stroke="#3a3a42" stroke-width="2"/><rect x="2" y="2" width="24" height="4.5" fill="#5048a8"/><rect x="2.8" y="7.2" width="4.6" height="4.4" fill="#ffffff"/><rect x="8.8" y="7.2" width="4.6" height="4.4" fill="#ffffff"/><rect x="14.8" y="7.2" width="4.6" height="4.4" fill="#ffffff"/><rect x="20.8" y="7.2" width="4.6" height="4.4" fill="#ffffff"/><rect x="2.8" y="13.0" width="4.6" height="4.4" fill="#ffffff"/><rect x="8.8" y="13.0" width="4.6" height="4.4" fill="#ffffff"/><rect x="14.8" y="13.0" width="4.6" height="4.4" fill="#ffffff"/><rect x="20.8" y="13.0" width="4.6" height="4.4" fill="#ffffff"/><rect x="2.8" y="18.8" width="4.6" height="4.4" fill="#ffffff"/><rect x="8.8" y="18.8" width="4.6" height="4.4" fill="#ffffff"/><rect x="14.8" y="18.8" width="4.6" height="4.4" fill="#ffffff"/><rect x="20.8" y="18.8" width="4.6" height="4.4" fill="#ffffff"/></svg>
<div style="left:189px;top:784px;width:68px;height:32px;background:#0a78d7;"></div>
<div class="ss" style="left:192px;top:787px;color:#fff;"><b class="w">g</b><b class="w">o</b><b class="w">o</b><b class="w">d</b><b class="w">s</b></div>
<svg style="left:121px;top:825px" width="18" height="18" viewBox="0 0 18 18"><rect x=".6" y=".6" width="16.8" height="16.8" rx="2" fill="url(#gHdr)" stroke="#8a8a8a" stroke-width="1.2"/><rect x="4" y="8" width="10" height="2" fill="#1e2e5e"/><rect x="8" y="4" width="2" height="10" fill="#1e2e5e"/></svg>
<div style="left:139px;top:832px;width:2px;height:2px;background:#555;"></div>
<div style="left:143px;top:832px;width:2px;height:2px;background:#555;"></div>
<div style="left:147px;top:832px;width:2px;height:2px;background:#555;"></div>
<svg style="left:153px;top:819px" width="28" height="26" viewBox="0 0 28 26"><rect x="1" y="1" width="26" height="24" fill="#d4d4d8" stroke="#3a3a42" stroke-width="2"/><rect x="2" y="2" width="24" height="4.5" fill="#5048a8"/><rect x="2.8" y="7.2" width="4.6" height="4.4" fill="#ffffff"/><rect x="8.8" y="7.2" width="4.6" height="4.4" fill="#ffffff"/><rect x="14.8" y="7.2" width="4.6" height="4.4" fill="#ffffff"/><rect x="20.8" y="7.2" width="4.6" height="4.4" fill="#ffffff"/><rect x="2.8" y="13.0" width="4.6" height="4.4" fill="#ffffff"/><rect x="8.8" y="13.0" width="4.6" height="4.4" fill="#ffffff"/><rect x="14.8" y="13.0" width="4.6" height="4.4" fill="#ffffff"/><rect x="20.8" y="13.0" width="4.6" height="4.4" fill="#ffffff"/><rect x="2.8" y="18.8" width="4.6" height="4.4" fill="#ffffff"/><rect x="8.8" y="18.8" width="4.6" height="4.4" fill="#ffffff"/><rect x="14.8" y="18.8" width="4.6" height="4.4" fill="#ffffff"/><rect x="20.8" y="18.8" width="4.6" height="4.4" fill="#ffffff"/></svg>
<div class="ss" style="left:192px;top:819px;"><b class="w">d</b><b class="w">e</b><b class="w">v</b><b class="w">_</b><b class="w">4</b></div>
<svg style="left:121px;top:857px" width="18" height="18" viewBox="0 0 18 18"><rect x=".6" y=".6" width="16.8" height="16.8" rx="2" fill="url(#gHdr)" stroke="#8a8a8a" stroke-width="1.2"/><rect x="4" y="8" width="10" height="2" fill="#1e2e5e"/><rect x="8" y="4" width="2" height="10" fill="#1e2e5e"/></svg>
<div style="left:139px;top:864px;width:2px;height:2px;background:#555;"></div>
<div style="left:143px;top:864px;width:2px;height:2px;background:#555;"></div>
<div style="left:147px;top:864px;width:2px;height:2px;background:#555;"></div>
<svg style="left:153px;top:851px" width="28" height="26" viewBox="0 0 28 26"><rect x="1" y="1" width="26" height="24" fill="#d4d4d8" stroke="#3a3a42" stroke-width="2"/><rect x="2" y="2" width="24" height="4.5" fill="#5048a8"/><rect x="2.8" y="7.2" width="4.6" height="4.4" fill="#ffffff"/><rect x="8.8" y="7.2" width="4.6" height="4.4" fill="#ffffff"/><rect x="14.8" y="7.2" width="4.6" height="4.4" fill="#ffffff"/><rect x="20.8" y="7.2" width="4.6" height="4.4" fill="#ffffff"/><rect x="2.8" y="13.0" width="4.6" height="4.4" fill="#ffffff"/><rect x="8.8" y="13.0" width="4.6" height="4.4" fill="#ffffff"/><rect x="14.8" y="13.0" width="4.6" height="4.4" fill="#ffffff"/><rect x="20.8" y="13.0" width="4.6" height="4.4" fill="#ffffff"/><rect x="2.8" y="18.8" width="4.6" height="4.4" fill="#ffffff"/><rect x="8.8" y="18.8" width="4.6" height="4.4" fill="#ffffff"/><rect x="14.8" y="18.8" width="4.6" height="4.4" fill="#ffffff"/><rect x="20.8" y="18.8" width="4.6" height="4.4" fill="#ffffff"/></svg>
<div class="ss" style="left:192px;top:851px;"><b class="w">d</b><b class="w">e</b><b class="w">v</b><b class="w">_</b><b class="w">5</b></div>
<svg style="left:121px;top:889px" width="18" height="18" viewBox="0 0 18 18"><rect x=".6" y=".6" width="16.8" height="16.8" rx="2" fill="url(#gHdr)" stroke="#8a8a8a" stroke-width="1.2"/><rect x="4" y="8" width="10" height="2" fill="#1e2e5e"/><rect x="8" y="4" width="2" height="10" fill="#1e2e5e"/></svg>
<div style="left:139px;top:896px;width:2px;height:2px;background:#555;"></div>
<div style="left:143px;top:896px;width:2px;height:2px;background:#555;"></div>
<div style="left:147px;top:896px;width:2px;height:2px;background:#555;"></div>
<svg style="left:153px;top:883px" width="28" height="26" viewBox="0 0 28 26"><rect x="1" y="1" width="26" height="24" fill="#d4d4d8" stroke="#3a3a42" stroke-width="2"/><rect x="2" y="2" width="24" height="4.5" fill="#5048a8"/><rect x="2.8" y="7.2" width="4.6" height="4.4" fill="#ffffff"/><rect x="8.8" y="7.2" width="4.6" height="4.4" fill="#ffffff"/><rect x="14.8" y="7.2" width="4.6" height="4.4" fill="#ffffff"/><rect x="20.8" y="7.2" width="4.6" height="4.4" fill="#ffffff"/><rect x="2.8" y="13.0" width="4.6" height="4.4" fill="#ffffff"/><rect x="8.8" y="13.0" width="4.6" height="4.4" fill="#ffffff"/><rect x="14.8" y="13.0" width="4.6" height="4.4" fill="#ffffff"/><rect x="20.8" y="13.0" width="4.6" height="4.4" fill="#ffffff"/><rect x="2.8" y="18.8" width="4.6" height="4.4" fill="#ffffff"/><rect x="8.8" y="18.8" width="4.6" height="4.4" fill="#ffffff"/><rect x="14.8" y="18.8" width="4.6" height="4.4" fill="#ffffff"/><rect x="20.8" y="18.8" width="4.6" height="4.4" fill="#ffffff"/></svg>
<div class="ss" style="left:192px;top:883px;"><b class="w">d</b><b class="w">e</b><b class="w">v</b><b class="w">_</b><b class="w">6</b></div>
<svg style="left:121px;top:921px" width="18" height="18" viewBox="0 0 18 18"><rect x=".6" y=".6" width="16.8" height="16.8" rx="2" fill="url(#gHdr)" stroke="#8a8a8a" stroke-width="1.2"/><rect x="4" y="8" width="10" height="2" fill="#1e2e5e"/><rect x="8" y="4" width="2" height="10" fill="#1e2e5e"/></svg>
<div style="left:139px;top:928px;width:2px;height:2px;background:#555;"></div>
<div style="left:143px;top:928px;width:2px;height:2px;background:#555;"></div>
<div style="left:147px;top:928px;width:2px;height:2px;background:#555;"></div>
<svg style="left:153px;top:915px" width="28" height="26" viewBox="0 0 28 26"><rect x="1" y="1" width="26" height="24" fill="#d4d4d8" stroke="#3a3a42" stroke-width="2"/><rect x="2" y="2" width="24" height="4.5" fill="#5048a8"/><rect x="2.8" y="7.2" width="4.6" height="4.4" fill="#ffffff"/><rect x="8.8" y="7.2" width="4.6" height="4.4" fill="#ffffff"/><rect x="14.8" y="7.2" width="4.6" height="4.4" fill="#ffffff"/><rect x="20.8" y="7.2" width="4.6" height="4.4" fill="#ffffff"/><rect x="2.8" y="13.0" width="4.6" height="4.4" fill="#ffffff"/><rect x="8.8" y="13.0" width="4.6" height="4.4" fill="#ffffff"/><rect x="14.8" y="13.0" width="4.6" height="4.4" fill="#ffffff"/><rect x="20.8" y="13.0" width="4.6" height="4.4" fill="#ffffff"/><rect x="2.8" y="18.8" width="4.6" height="4.4" fill="#ffffff"/><rect x="8.8" y="18.8" width="4.6" height="4.4" fill="#ffffff"/><rect x="14.8" y="18.8" width="4.6" height="4.4" fill="#ffffff"/><rect x="20.8" y="18.8" width="4.6" height="4.4" fill="#ffffff"/></svg>
<div class="ss" style="left:192px;top:915px;"><b class="w">d</b><b class="w">e</b><b class="w">v</b><b class="w">_</b><b class="w">7</b></div>
<svg style="left:121px;top:953px" width="18" height="18" viewBox="0 0 18 18"><rect x=".6" y=".6" width="16.8" height="16.8" rx="2" fill="url(#gHdr)" stroke="#8a8a8a" stroke-width="1.2"/><rect x="4" y="8" width="10" height="2" fill="#1e2e5e"/><rect x="8" y="4" width="2" height="10" fill="#1e2e5e"/></svg>
<div style="left:139px;top:960px;width:2px;height:2px;background:#555;"></div>
<div style="left:143px;top:960px;width:2px;height:2px;background:#555;"></div>
<div style="left:147px;top:960px;width:2px;height:2px;background:#555;"></div>
<svg style="left:153px;top:947px" width="28" height="26" viewBox="0 0 28 26"><rect x="1" y="1" width="26" height="24" fill="#d4d4d8" stroke="#3a3a42" stroke-width="2"/><rect x="2" y="2" width="24" height="4.5" fill="#5048a8"/><rect x="2.8" y="7.2" width="4.6" height="4.4" fill="#ffffff"/><rect x="8.8" y="7.2" width="4.6" height="4.4" fill="#ffffff"/><rect x="14.8" y="7.2" width="4.6" height="4.4" fill="#ffffff"/><rect x="20.8" y="7.2" width="4.6" height="4.4" fill="#ffffff"/><rect x="2.8" y="13.0" width="4.6" height="4.4" fill="#ffffff"/><rect x="8.8" y="13.0" width="4.6" height="4.4" fill="#ffffff"/><rect x="14.8" y="13.0" width="4.6" height="4.4" fill="#ffffff"/><rect x="20.8" y="13.0" width="4.6" height="4.4" fill="#ffffff"/><rect x="2.8" y="18.8" width="4.6" height="4.4" fill="#ffffff"/><rect x="8.8" y="18.8" width="4.6" height="4.4" fill="#ffffff"/><rect x="14.8" y="18.8" width="4.6" height="4.4" fill="#ffffff"/><rect x="20.8" y="18.8" width="4.6" height="4.4" fill="#ffffff"/></svg>
<div class="ss" style="left:192px;top:947px;"><b class="w">d</b><b class="w">e</b><b class="w">v</b><b class="w">_</b><b class="w">8</b></div>
<svg style="left:121px;top:985px" width="18" height="18" viewBox="0 0 18 18"><rect x=".6" y=".6" width="16.8" height="16.8" rx="2" fill="url(#gHdr)" stroke="#8a8a8a" stroke-width="1.2"/><rect x="4" y="8" width="10" height="2" fill="#1e2e5e"/><rect x="8" y="4" width="2" height="10" fill="#1e2e5e"/></svg>
<div style="left:139px;top:992px;width:2px;height:2px;background:#555;"></div>
<div style="left:143px;top:992px;width:2px;height:2px;background:#555;"></div>
<div style="left:147px;top:992px;width:2px;height:2px;background:#555;"></div>
<svg style="left:153px;top:979px" width="28" height="26" viewBox="0 0 28 26"><rect x="1" y="1" width="26" height="24" fill="#d4d4d8" stroke="#3a3a42" stroke-width="2"/><rect x="2" y="2" width="24" height="4.5" fill="#5048a8"/><rect x="2.8" y="7.2" width="4.6" height="4.4" fill="#ffffff"/><rect x="8.8" y="7.2" width="4.6" height="4.4" fill="#ffffff"/><rect x="14.8" y="7.2" width="4.6" height="4.4" fill="#ffffff"/><rect x="20.8" y="7.2" width="4.6" height="4.4" fill="#ffffff"/><rect x="2.8" y="13.0" width="4.6" height="4.4" fill="#ffffff"/><rect x="8.8" y="13.0" width="4.6" height="4.4" fill="#ffffff"/><rect x="14.8" y="13.0" width="4.6" height="4.4" fill="#ffffff"/><rect x="20.8" y="13.0" width="4.6" height="4.4" fill="#ffffff"/><rect x="2.8" y="18.8" width="4.6" height="4.4" fill="#ffffff"/><rect x="8.8" y="18.8" width="4.6" height="4.4" fill="#ffffff"/><rect x="14.8" y="18.8" width="4.6" height="4.4" fill="#ffffff"/><rect x="20.8" y="18.8" width="4.6" height="4.4" fill="#ffffff"/></svg>
<div class="ss" style="left:192px;top:979px;"><b class="w">d</b><b class="w">e</b><b class="w">v</b><b class="w">_</b><b class="w">9</b></div>
<svg style="left:121px;top:1017px" width="18" height="18" viewBox="0 0 18 18"><rect x=".6" y=".6" width="16.8" height="16.8" rx="2" fill="url(#gHdr)" stroke="#8a8a8a" stroke-width="1.2"/><rect x="4" y="8" width="10" height="2" fill="#1e2e5e"/><rect x="8" y="4" width="2" height="10" fill="#1e2e5e"/></svg>
<div style="left:139px;top:1024px;width:2px;height:2px;background:#555;"></div>
<div style="left:143px;top:1024px;width:2px;height:2px;background:#555;"></div>
<div style="left:147px;top:1024px;width:2px;height:2px;background:#555;"></div>
<svg style="left:153px;top:1011px" width="28" height="26" viewBox="0 0 28 26"><rect x="1" y="1" width="26" height="24" fill="#d4d4d8" stroke="#3a3a42" stroke-width="2"/><rect x="2" y="2" width="24" height="4.5" fill="#5048a8"/><rect x="2.8" y="7.2" width="4.6" height="4.4" fill="#ffffff"/><rect x="8.8" y="7.2" width="4.6" height="4.4" fill="#ffffff"/><rect x="14.8" y="7.2" width="4.6" height="4.4" fill="#ffffff"/><rect x="20.8" y="7.2" width="4.6" height="4.4" fill="#ffffff"/><rect x="2.8" y="13.0" width="4.6" height="4.4" fill="#ffffff"/><rect x="8.8" y="13.0" width="4.6" height="4.4" fill="#ffffff"/><rect x="14.8" y="13.0" width="4.6" height="4.4" fill="#ffffff"/><rect x="20.8" y="13.0" width="4.6" height="4.4" fill="#ffffff"/><rect x="2.8" y="18.8" width="4.6" height="4.4" fill="#ffffff"/><rect x="8.8" y="18.8" width="4.6" height="4.4" fill="#ffffff"/><rect x="14.8" y="18.8" width="4.6" height="4.4" fill="#ffffff"/><rect x="20.8" y="18.8" width="4.6" height="4.4" fill="#ffffff"/></svg>
<div class="ss" style="left:192px;top:1011px;"><b class="w"><b class="n" style="width:19.45px;margin-left:-3.72px;transform:scaleX(0.591)">m</b></b><b class="w">e</b><b class="w">t</b><b class="w">e</b><b class="w">r</b><b class="w">s</b></div>
<div style="left:132px;top:1057px;width:2px;height:2px;background:#555;"></div>
<div style="left:136px;top:1057px;width:2px;height:2px;background:#555;"></div>
<div style="left:140px;top:1057px;width:2px;height:2px;background:#555;"></div>
<div style="left:144px;top:1057px;width:2px;height:2px;background:#555;"></div>
<div style="left:148px;top:1057px;width:2px;height:2px;background:#555;"></div>
<svg style="left:156px;top:1048px" width="20" height="20" viewBox="0 0 20 20"><circle cx="10" cy="10" r="7.5" fill="#4a4a4a"/><rect x="8.5" y="0.5" width="3" height="4" fill="#4a4a4a"/><rect x="8.5" y="15.5" width="3" height="4" fill="#4a4a4a"/><rect x="0.5" y="8.5" width="4" height="3" fill="#4a4a4a"/><rect x="15.5" y="8.5" width="4" height="3" fill="#4a4a4a"/></svg>
<div class="ss" style="left:191px;top:1043px;"><b class="w"><b class="n" style="width:13.90px;margin-left:-0.95px;transform:scaleX(0.827)">F</b></b><b class="w">u</b><b class="w">n</b><b class="w">c</b><b class="w">t</b><b class="w">i</b><b class="w">o</b><b class="w">n</b><b class="w">s</b></div>
<div style="left:58px;top:1074px;width:893px;height:57px;background:#f4f4f6;"></div>
<div style="left:63px;top:1082px;width:192px;height:49px;background:#f9f9fa;"></div>
<svg style="left:72px;top:1092px" width="26" height="30" viewBox="0 0 26 30"><path d="M4 3 H10 V28 H4 Q1.8 28 1.8 25 V6 Q1.8 3 4 3 Z" fill="url(#gGhost)" stroke="#c4c4c4" stroke-width="1.2"/><rect x="8.7" y="1.7" width="13.6" height="26.6" fill="url(#gSrv)" stroke="#9a9a9a" stroke-width="1.4"/><rect x="11" y="5.5" width="9" height="2" fill="#8c8c8c"/><rect x="11" y="10" width="9" height="2" fill="#8c8c8c"/><rect x="14.5" y="15.5" width="4" height="3" fill="#3cb043"/></svg>
<div class="ss" style="left:107px;top:1094px;"><b class="w"><b class="n" style="width:13.90px;margin-left:-0.95px;transform:scaleX(0.827)">S</b></b><b class="w">e</b><b class="w">r</b><b class="w">v</b><b class="w">e</b><b class="w">r</b><b class="w"> </b><b class="w"><b class="n" style="width:15.27px;margin-left:-1.64px;transform:scaleX(0.753)">T</b></b><b class="w">r</b><b class="w">e</b><b class="w">e</b></div>
<div style="left:256px;top:1084px;width:164px;height:41px;background:#f1f1f3;border:1px solid #e6e6ea;"></div>
<svg style="left:266px;top:1086px" width="30" height="32" viewBox="0 0 30 32"><rect x="7" y="1" width="14" height="12" fill="#f4f4f4" stroke="#a0a0a0"/><rect x="1" y="5" width="6" height="24" fill="#8a8a8a"/><rect x="3" y="13" width="26" height="17" fill="#6b9fd4" stroke="#4a7cb4" stroke-width="1"/><rect x="4" y="15" width="24" height="5" fill="#9cc0e8"/></svg>
<div class="ss" style="left:304px;top:1090px;"><b class="w"><b class="n" style="width:13.90px;margin-left:-0.95px;transform:scaleX(0.827)">F</b></b><b class="w">i</b><b class="w">l</b><b class="w">e</b><b class="w"> </b><b class="w"><b class="n" style="width:15.27px;margin-left:-1.64px;transform:scaleX(0.753)">T</b></b><b class="w">r</b><b class="w">e</b><b class="w">e</b></div>
<div style="left:967px;top:151px;width:729px;height:44px;background:#9bb4cf;"></div>
<svg style="left:966px;top:155px" width="38" height="36" viewBox="0 0 38 36"><path d="M8.2 2.2 H28 L34.2 8.4 V33.2 H8.2 Z" fill="#e6f2fc" stroke="#3f6fb0" stroke-width="2.2"/><rect x="11" y="5" width="15" height="3" fill="#c8d4e4"/><rect x="11" y="25" width="20" height="4.5" fill="#58b4f4"/><path d="M12 9.5 L5 15.5 L12 21.5" fill="none" stroke="#3a8ce0" stroke-width="3.4"/><path d="M18 9.5 L25 15.5 L18 21.5" fill="none" stroke="#3a8ce0" stroke-width="3.4"/><rect x="12.5" y="13" width="5" height="5" fill="#f0f6ff" transform="rotate(45 15 15.5)"/></svg>
<div class="ss" style="left:1008px;top:160px;"><b class="w"><b class="n" style="width:18.05px;margin-left:-3.03px;transform:scaleX(0.637)">D</b></b><b class="w">o</b><b class="w">c</b><b class="w">u</b><b class="w"><b class="n" style="width:19.45px;margin-left:-3.72px;transform:scaleX(0.591)">m</b></b><b class="w">e</b><b class="w">n</b><b class="w">t</b><b class="w">s</b></div>
<div style="left:967px;top:195px;width:729px;height:54px;background:#efeff1;"></div>
<div style="left:967px;top:197px;width:171px;height:52px;background:#f6f6f7;"></div>
<svg style="left:986px;top:202px" width="30" height="34" viewBox="0 0 30 34"><path d="M2 1.5 h18 l7 7 v24 h-25 z" fill="#dfe8f6" stroke="#3f6db0" stroke-width="2.2"/><rect x="5" y="22" width="19" height="7" fill="#e8585a"/></svg>
<div class="ss" style="left:1025px;top:207px;"><b class="w">n</b><b class="w">e</b><b class="w"><b class="n" style="width:18.05px;margin-left:-3.03px;transform:scaleX(0.637)">w</b></b><b class="w"> </b><b class="w">2</b></div>
<div style="left:1090px;top:204px;width:30px;height:30px;background:#fdfdfd;border:1px solid #dcdcde;border-radius:3px;"></div>
<div class="ss" style="left:1099px;top:207px;"><b class="w">x</b></div>
<div style="left:967px;top:241px;width:729px;height:8px;background:#f6f6f8;"></div>
<div style="left:971px;top:249px;width:725px;height:876px;background:#ffffff;border-left:2px solid #707074;border-top:2px solid #707074;border-bottom:2px solid #707074;"></div>
<div style="left:973px;top:251px;width:68px;height:872px;background:#efeff1;"></div>
<div style="left:973px;top:257px;width:68px;height:36px;background:#c8c8c8;"></div>
<div class="code" style="left:999px;top:262px;color:#333;">1</div>
<div style="left:1047px;top:257px;width:576px;height:36px;background:#99c8f8;"></div>
<div class="code" style="left:1047px;top:262px;"><span style="color:#3030d8">select</span> <span style="color:#1a2a5a;display:inline-block;transform:translateY(9px) scale(1.45)">*</span> <span style="color:#c58a62">from</span> <span style="color:#111">power.meters</span> <span style="color:#c58a62">limit</span> <span style="color:#8a9a3a">10</span><span style="color:#111">;</span></div>
<div style="left:963px;top:1125px;width:733px;height:6px;background:#f6f6f8;"></div>
<div style="left:963px;top:1131px;width:733px;height:3px;background:#6e6e72;"></div>
<div style="left:0px;top:1134px;width:1696px;height:9px;background:#f0f0f0;"></div>
<div style="left:0px;top:1143px;width:1696px;height:4px;background:#ffffff;"></div>
<div style="left:3px;top:1147px;width:1693px;height:44px;background:#bfcddc;"></div>
<svg style="left:4px;top:1159px" width="36" height="30" viewBox="0 0 36 30"><rect x="2.5" y="3" width="28" height="14.5" fill="#e6e6e6" stroke="#9c9c9c" stroke-width="2"/><rect x="4" y="4.5" width="25" height="2" fill="#f6f6f6"/><g transform="translate(13,7.5) scale(1.0)"><path d="M0.8 4.8 H11 V0.8 L20.2 8.5 L11 16.2 V12.2 H0.8 Z" fill="url(#gArrow)" stroke="#2c7a1c" stroke-width="1.6" stroke-linejoin="miter"/><path d="M2.5 6.6 H12.5" stroke="#c4eaa8" stroke-width="1.6"/></g></svg>
<div class="ss" style="left:45px;top:1156px;"><b class="w"><b class="n" style="width:16.67px;margin-left:-2.34px;transform:scaleX(0.690)">R</b></b><b class="w">e</b><b class="w">s</b><b class="w">u</b><b class="w">l</b><b class="w">t</b></div>
<div style="left:3px;top:1191px;width:1693px;height:2px;background:#6f7a88;"></div>
<div style="left:3px;top:1193px;width:1693px;height:459px;background:#ffffff;"></div>
<div style="left:3px;top:1193px;width:2px;height:459px;background:#76767a;"></div>
<div class="ss" style="left:13px;top:1205px;"><b class="w">t</b><b class="w">s</b></div>
<div class="ss" style="left:351px;top:1205px;"><b class="w">n</b><b class="w">u</b><b class="w"><b class="n" style="width:19.45px;margin-left:-3.72px;transform:scaleX(0.591)">m</b></b></div>
<div class="ss" style="left:428px;top:1205px;"><b class="w">t</b><b class="w">e</b><b class="w"><b class="n" style="width:19.45px;margin-left:-3.72px;transform:scaleX(0.591)">m</b></b><b class="w">p</b><b class="w">e</b><b class="w">r</b><b class="w">a</b><b class="w">t</b><b class="w">u</b><b class="w">r</b><b class="w">e</b></div>
<div class="ss" style="left:600px;top:1205px;"><b class="w">g</b><b class="w">o</b><b class="w">o</b><b class="w">d</b><b class="w">s</b></div>
<div class="ss" style="left:700px;top:1205px;"><b class="w">d</b><b class="w">e</b><b class="w">v</b><b class="w">i</b><b class="w">c</b><b class="w">e</b></div>
<div style="left:339px;top:1193px;width:1px;height:52px;background:#e6e6ea;"></div>
<div style="left:415px;top:1193px;width:1px;height:52px;background:#e6e6ea;"></div>
<div style="left:587px;top:1193px;width:1px;height:52px;background:#e6e6ea;"></div>
<div style="left:687px;top:1193px;width:1px;height:52px;background:#e6e6ea;"></div>
<div style="left:799px;top:1193px;width:1px;height:52px;background:#e6e6ea;"></div>
<div style="left:5px;top:1245px;width:796px;height:34px;background:#ffffff;"></div>
<div style="left:5px;top:1279px;width:796px;height:2px;background:#76767a;"></div>
<div style="left:339px;top:1245px;width:2px;height:36px;background:#76767a;"></div>
<div style="left:415px;top:1245px;width:2px;height:36px;background:#76767a;"></div>
<div style="left:587px;top:1245px;width:2px;height:36px;background:#76767a;"></div>
<div style="left:687px;top:1245px;width:2px;height:36px;background:#76767a;"></div>
<div style="left:799px;top:1245px;width:2px;height:36px;background:#76767a;"></div>
<div class="ss" style="left:25px;top:1247px;"><b class="w">2</b><b class="w">0</b><b class="w">1</b><b class="w">5</b><b class="w"><b class="n" style="width:12.5px;margin-left:-0.25px;transform:scaleX(.8)">&#8211;</b></b><b class="w">0</b><b class="w">1</b><b class="w"><b class="n" style="width:12.5px;margin-left:-0.25px;transform:scaleX(.8)">&#8211;</b></b><b class="w">0</b><b class="w">1</b><b class="w"><b class="n" style="width:15.27px;margin-left:-1.64px;transform:scaleX(0.753)">T</b></b><b class="w">0</b><b class="w">0</b><b class="w">:</b><b class="w">0</b><b class="w">0</b><b class="w">:</b><b class="w">0</b><b class="w">0</b><b class="w">.</b><b class="w">0</b><b class="w">0</b><b class="w">0</b><b class="w">0</b><b class="w">0</b><b class="w">0</b></div>
<div class="ss" style="left:377px;top:1247px;"><b class="w">1</b><b class="w">1</b><b class="w">1</b></div>
<div class="ss" style="left:525px;top:1247px;"><b class="w">1</b><b class="w">5</b><b class="w">.</b><b class="w">7</b><b class="w">5</b></div>
<div class="ss" style="left:673px;top:1247px;"><b class="w">3</b></div>
<div class="ss" style="left:737px;top:1247px;"><b class="w">d</b><b class="w">e</b><b class="w">v</b><b class="w">_</b><b class="w">0</b></div>
<div style="left:5px;top:1281px;width:796px;height:34px;background:#e4e5ef;"></div>
<div style="left:5px;top:1315px;width:796px;height:2px;background:#76767a;"></div>
<div style="left:339px;top:1281px;width:2px;height:36px;background:#76767a;"></div>
<div style="left:415px;top:1281px;width:2px;height:36px;background:#76767a;"></div>
<div style="left:587px;top:1281px;width:2px;height:36px;background:#76767a;"></div>
<div style="left:687px;top:1281px;width:2px;height:36px;background:#76767a;"></div>
<div style="left:799px;top:1281px;width:2px;height:36px;background:#76767a;"></div>
<div class="ss" style="left:25px;top:1283px;"><b class="w">2</b><b class="w">0</b><b class="w">1</b><b class="w">5</b><b class="w"><b class="n" style="width:12.5px;margin-left:-0.25px;transform:scaleX(.8)">&#8211;</b></b><b class="w">0</b><b class="w">1</b><b class="w"><b class="n" style="width:12.5px;margin-left:-0.25px;transform:scaleX(.8)">&#8211;</b></b><b class="w">0</b><b class="w">2</b><b class="w"><b class="n" style="width:15.27px;margin-left:-1.64px;transform:scaleX(0.753)">T</b></b><b class="w">0</b><b class="w">0</b><b class="w">:</b><b class="w">0</b><b class="w">0</b><b class="w">:</b><b class="w">0</b><b class="w">0</b><b class="w">.</b><b class="w">0</b><b class="w">0</b><b class="w">0</b><b class="w">0</b><b class="w">0</b><b class="w">0</b></div>
<div class="ss" style="left:389px;top:1283px;"><b class="w">8</b><b class="w">0</b></div>
<div class="ss" style="left:537px;top:1283px;"><b class="w">1</b><b class="w">4</b><b class="w">.</b><b class="w">7</b></div>
<div class="ss" style="left:673px;top:1283px;"><b class="w">8</b></div>
<div class="ss" style="left:737px;top:1283px;"><b class="w">d</b><b class="w">e</b><b class="w">v</b><b class="w">_</b><b class="w">0</b></div>
<div style="left:5px;top:1317px;width:796px;height:34px;background:#ffffff;"></div>
<div style="left:5px;top:1351px;width:796px;height:2px;background:#76767a;"></div>
<div style="left:339px;top:1317px;width:2px;height:36px;background:#76767a;"></div>
<div style="left:415px;top:1317px;width:2px;height:36px;background:#76767a;"></div>
<div style="left:587px;top:1317px;width:2px;height:36px;background:#76767a;"></div>
<div style="left:687px;top:1317px;width:2px;height:36px;background:#76767a;"></div>
<div style="left:799px;top:1317px;width:2px;height:36px;background:#76767a;"></div>
<div class="ss" style="left:25px;top:1319px;"><b class="w">2</b><b class="w">0</b><b class="w">1</b><b class="w">5</b><b class="w"><b class="n" style="width:12.5px;margin-left:-0.25px;transform:scaleX(.8)">&#8211;</b></b><b class="w">0</b><b class="w">1</b><b class="w"><b class="n" style="width:12.5px;margin-left:-0.25px;transform:scaleX(.8)">&#8211;</b></b><b class="w">0</b><b class="w">3</b><b class="w"><b class="n" style="width:15.27px;margin-left:-1.64px;transform:scaleX(0.753)">T</b></b><b class="w">0</b><b class="w">0</b><b class="w">:</b><b class="w">0</b><b class="w">0</b><b class="w">:</b><b class="w">0</b><b class="w">0</b><b class="w">.</b><b class="w">0</b><b class="w">0</b><b class="w">0</b><b class="w">0</b><b class="w">0</b><b class="w">0</b></div>
<div class="ss" style="left:377px;top:1319px;"><b class="w">1</b><b class="w">2</b><b class="w">3</b></div>
<div class="ss" style="left:525px;top:1319px;"><b class="w">1</b><b class="w">9</b><b class="w">.</b><b class="w">9</b><b class="w">5</b></div>
<div class="ss" style="left:673px;top:1319px;"><b class="w">3</b></div>
<div class="ss" style="left:737px;top:1319px;"><b class="w">d</b><b class="w">e</b><b class="w">v</b><b class="w">_</b><b class="w">0</b></div>
<div style="left:5px;top:1353px;width:796px;height:34px;background:#e4e5ef;"></div>
<div style="left:5px;top:1387px;width:796px;height:2px;background:#76767a;"></div>
<div style="left:339px;top:1353px;width:2px;height:36px;background:#76767a;"></div>
<div style="left:415px;top:1353px;width:2px;height:36px;background:#76767a;"></div>
<div style="left:587px;top:1353px;width:2px;height:36px;background:#76767a;"></div>
<div style="left:687px;top:1353px;width:2px;height:36px;background:#76767a;"></div>
<div style="left:799px;top:1353px;width:2px;height:36px;background:#76767a;"></div>
<div class="ss" style="left:25px;top:1355px;"><b class="w">2</b><b class="w">0</b><b class="w">1</b><b class="w">5</b><b class="w"><b class="n" style="width:12.5px;margin-left:-0.25px;transform:scaleX(.8)">&#8211;</b></b><b class="w">0</b><b class="w">1</b><b class="w"><b class="n" style="width:12.5px;margin-left:-0.25px;transform:scaleX(.8)">&#8211;</b></b><b class="w">0</b><b class="w">4</b><b class="w"><b class="n" style="width:15.27px;margin-left:-1.64px;transform:scaleX(0.753)">T</b></b><b class="w">0</b><b class="w">0</b><b class="w">:</b><b class="w">0</b><b class="w">0</b><b class="w">:</b><b class="w">0</b><b class="w">0</b><b class="w">.</b><b class="w">0</b><b class="w">0</b><b class="w">0</b><b class="w">0</b><b class="w">0</b><b class="w">0</b></div>
<div class="ss" style="left:389px;top:1355px;"><b class="w">6</b><b class="w">7</b></div>
<div class="ss" style="left:525px;top:1355px;"><b class="w">1</b><b class="w">7</b><b class="w">.</b><b class="w">8</b><b class="w">5</b></div>
<div class="ss" style="left:673px;top:1355px;"><b class="w">7</b></div>
<div class="ss" style="left:737px;top:1355px;"><b class="w">d</b><b class="w">e</b><b class="w">v</b><b class="w">_</b><b class="w">0</b></div>
<div style="left:5px;top:1389px;width:796px;height:34px;background:#ffffff;"></div>
<div style="left:5px;top:1423px;width:796px;height:2px;background:#76767a;"></div>
<div style="left:339px;top:1389px;width:2px;height:36px;background:#76767a;"></div>
<div style="left:415px;top:1389px;width:2px;height:36px;background:#76767a;"></div>
<div style="left:587px;top:1389px;width:2px;height:36px;background:#76767a;"></div>
<div style="left:687px;top:1389px;width:2px;height:36px;background:#76767a;"></div>
<div style="left:799px;top:1389px;width:2px;height:36px;background:#76767a;"></div>
<div class="ss" style="left:25px;top:1391px;"><b class="w">2</b><b class="w">0</b><b class="w">1</b><b class="w">5</b><b class="w"><b class="n" style="width:12.5px;margin-left:-0.25px;transform:scaleX(.8)">&#8211;</b></b><b class="w">0</b><b class="w">1</b><b class="w"><b class="n" style="width:12.5px;margin-left:-0.25px;transform:scaleX(.8)">&#8211;</b></b><b class="w">0</b><b class="w">5</b><b class="w"><b class="n" style="width:15.27px;margin-left:-1.64px;transform:scaleX(0.753)">T</b></b><b class="w">0</b><b class="w">0</b><b class="w">:</b><b class="w">0</b><b class="w">0</b><b class="w">:</b><b class="w">0</b><b class="w">0</b><b class="w">.</b><b class="w">0</b><b class="w">0</b><b class="w">0</b><b class="w">0</b><b class="w">0</b><b class="w">0</b></div>
<div class="ss" style="left:389px;top:1391px;"><b class="w">7</b><b class="w">2</b></div>
<div class="ss" style="left:537px;top:1391px;"><b class="w">1</b><b class="w">6</b><b class="w">.</b><b class="w">8</b></div>
<div class="ss" style="left:661px;top:1391px;"><b class="w">1</b><b class="w">2</b></div>
<div class="ss" style="left:737px;top:1391px;"><b class="w">d</b><b class="w">e</b><b class="w">v</b><b class="w">_</b><b class="w">0</b></div>
<div style="left:5px;top:1425px;width:796px;height:34px;background:#e4e5ef;"></div>
<div style="left:5px;top:1459px;width:796px;height:2px;background:#76767a;"></div>
<div style="left:339px;top:1425px;width:2px;height:36px;background:#76767a;"></div>
<div style="left:415px;top:1425px;width:2px;height:36px;background:#76767a;"></div>
<div style="left:587px;top:1425px;width:2px;height:36px;background:#76767a;"></div>
<div style="left:687px;top:1425px;width:2px;height:36px;background:#76767a;"></div>
<div style="left:799px;top:1425px;width:2px;height:36px;background:#76767a;"></div>
<div class="ss" style="left:25px;top:1427px;"><b class="w">2</b><b class="w">0</b><b class="w">1</b><b class="w">5</b><b class="w"><b class="n" style="width:12.5px;margin-left:-0.25px;transform:scaleX(.8)">&#8211;</b></b><b class="w">0</b><b class="w">1</b><b class="w"><b class="n" style="width:12.5px;margin-left:-0.25px;transform:scaleX(.8)">&#8211;</b></b><b class="w">0</b><b class="w">1</b><b class="w"><b class="n" style="width:15.27px;margin-left:-1.64px;transform:scaleX(0.753)">T</b></b><b class="w">0</b><b class="w">0</b><b class="w">:</b><b class="w">0</b><b class="w">0</b><b class="w">:</b><b class="w">0</b><b class="w">0</b><b class="w">.</b><b class="w">0</b><b class="w">0</b><b class="w">0</b><b class="w">0</b><b class="w">0</b><b class="w">0</b></div>
<div class="ss" style="left:377px;top:1427px;"><b class="w">1</b><b class="w">0</b><b class="w">5</b></div>
<div class="ss" style="left:525px;top:1427px;"><b class="w">1</b><b class="w">7</b><b class="w">.</b><b class="w">8</b><b class="w">5</b></div>
<div class="ss" style="left:673px;top:1427px;"><b class="w">9</b></div>
<div class="ss" style="left:737px;top:1427px;"><b class="w">d</b><b class="w">e</b><b class="w">v</b><b class="w">_</b><b class="w">3</b></div>
<div style="left:5px;top:1461px;width:796px;height:34px;background:#ffffff;"></div>
<div style="left:5px;top:1495px;width:796px;height:2px;background:#76767a;"></div>
<div style="left:339px;top:1461px;width:2px;height:36px;background:#76767a;"></div>
<div style="left:415px;top:1461px;width:2px;height:36px;background:#76767a;"></div>
<div style="left:587px;top:1461px;width:2px;height:36px;background:#76767a;"></div>
<div style="left:687px;top:1461px;width:2px;height:36px;background:#76767a;"></div>
<div style="left:799px;top:1461px;width:2px;height:36px;background:#76767a;"></div>
<div class="ss" style="left:25px;top:1463px;"><b class="w">2</b><b class="w">0</b><b class="w">1</b><b class="w">5</b><b class="w"><b class="n" style="width:12.5px;margin-left:-0.25px;transform:scaleX(.8)">&#8211;</b></b><b class="w">0</b><b class="w">1</b><b class="w"><b class="n" style="width:12.5px;margin-left:-0.25px;transform:scaleX(.8)">&#8211;</b></b><b class="w">0</b><b class="w">2</b><b class="w"><b class="n" style="width:15.27px;margin-left:-1.64px;transform:scaleX(0.753)">T</b></b><b class="w">0</b><b class="w">0</b><b class="w">:</b><b class="w">0</b><b class="w">0</b><b class="w">:</b><b class="w">0</b><b class="w">0</b><b class="w">.</b><b class="w">0</b><b class="w">0</b><b class="w">0</b><b class="w">0</b><b class="w">0</b><b class="w">0</b></div>
<div class="ss" style="left:377px;top:1463px;"><b class="w">1</b><b class="w">0</b><b class="w">5</b></div>
<div class="ss" style="left:537px;top:1463px;"><b class="w">1</b><b class="w">4</b><b class="w">.</b><b class="w">7</b></div>
<div class="ss" style="left:673px;top:1463px;"><b class="w">9</b></div>
<div class="ss" style="left:737px;top:1463px;"><b class="w">d</b><b class="w">e</b><b class="w">v</b><b class="w">_</b><b class="w">3</b></div>
<div style="left:5px;top:1497px;width:796px;height:34px;background:#e4e5ef;"></div>
<div style="left:5px;top:1531px;width:796px;height:2px;background:#76767a;"></div>
<div style="left:339px;top:1497px;width:2px;height:36px;background:#76767a;"></div>
<div style="left:415px;top:1497px;width:2px;height:36px;background:#76767a;"></div>
<div style="left:587px;top:1497px;width:2px;height:36px;background:#76767a;"></div>
<div style="left:687px;top:1497px;width:2px;height:36px;background:#76767a;"></div>
<div style="left:799px;top:1497px;width:2px;height:36px;background:#76767a;"></div>
<div class="ss" style="left:25px;top:1499px;"><b class="w">2</b><b class="w">0</b><b class="w">1</b><b class="w">5</b><b class="w"><b class="n" style="width:12.5px;margin-left:-0.25px;transform:scaleX(.8)">&#8211;</b></b><b class="w">0</b><b class="w">1</b><b class="w"><b class="n" style="width:12.5px;margin-left:-0.25px;transform:scaleX(.8)">&#8211;</b></b><b class="w">0</b><b class="w">3</b><b class="w"><b class="n" style="width:15.27px;margin-left:-1.64px;transform:scaleX(0.753)">T</b></b><b class="w">0</b><b class="w">0</b><b class="w">:</b><b class="w">0</b><b class="w">0</b><b class="w">:</b><b class="w">0</b><b class="w">0</b><b class="w">.</b><b class="w">0</b><b class="w">0</b><b class="w">0</b><b class="w">0</b><b class="w">0</b><b class="w">0</b></div>
<div class="ss" style="left:377px;top:1499px;"><b class="w">1</b><b class="w">0</b><b class="w">9</b></div>
<div class="ss" style="left:537px;top:1499px;"><b class="w">1</b><b class="w">4</b><b class="w">.</b><b class="w">7</b></div>
<div class="ss" style="left:673px;top:1499px;"><b class="w">1</b></div>
<div class="ss" style="left:737px;top:1499px;"><b class="w">d</b><b class="w">e</b><b class="w">v</b><b class="w">_</b><b class="w">3</b></div>
<div style="left:5px;top:1533px;width:796px;height:34px;background:#ffffff;"></div>
<div style="left:5px;top:1567px;width:796px;height:2px;background:#76767a;"></div>
<div style="left:339px;top:1533px;width:2px;height:36px;background:#76767a;"></div>
<div style="left:415px;top:1533px;width:2px;height:36px;background:#76767a;"></div>
<div style="left:587px;top:1533px;width:2px;height:36px;background:#76767a;"></div>
<div style="left:687px;top:1533px;width:2px;height:36px;background:#76767a;"></div>
<div style="left:799px;top:1533px;width:2px;height:36px;background:#76767a;"></div>
<div class="ss" style="left:25px;top:1535px;"><b class="w">2</b><b class="w">0</b><b class="w">1</b><b class="w">5</b><b class="w"><b class="n" style="width:12.5px;margin-left:-0.25px;transform:scaleX(.8)">&#8211;</b></b><b class="w">0</b><b class="w">1</b><b class="w"><b class="n" style="width:12.5px;margin-left:-0.25px;transform:scaleX(.8)">&#8211;</b></b><b class="w">0</b><b class="w">4</b><b class="w"><b class="n" style="width:15.27px;margin-left:-1.64px;transform:scaleX(0.753)">T</b></b><b class="w">0</b><b class="w">0</b><b class="w">:</b><b class="w">0</b><b class="w">0</b><b class="w">:</b><b class="w">0</b><b class="w">0</b><b class="w">.</b><b class="w">0</b><b class="w">0</b><b class="w">0</b><b class="w">0</b><b class="w">0</b><b class="w">0</b></div>
<div class="ss" style="left:377px;top:1535px;"><b class="w">1</b><b class="w">0</b><b class="w">6</b></div>
<div class="ss" style="left:537px;top:1535px;"><b class="w">1</b><b class="w">4</b><b class="w">.</b><b class="w">7</b></div>
<div class="ss" style="left:661px;top:1535px;"><b class="w">1</b><b class="w">0</b></div>
<div class="ss" style="left:737px;top:1535px;"><b class="w">d</b><b class="w">e</b><b class="w">v</b><b class="w">_</b><b class="w">3</b></div>
<div style="left:5px;top:1569px;width:796px;height:34px;background:#e4e5ef;"></div>
<div style="left:5px;top:1603px;width:796px;height:2px;background:#76767a;"></div>
<div style="left:339px;top:1569px;width:2px;height:36px;background:#76767a;"></div>
<div style="left:415px;top:1569px;width:2px;height:36px;background:#76767a;"></div>
<div style="left:587px;top:1569px;width:2px;height:36px;background:#76767a;"></div>
<div style="left:687px;top:1569px;width:2px;height:36px;background:#76767a;"></div>
<div style="left:799px;top:1569px;width:2px;height:36px;background:#76767a;"></div>
<div class="ss" style="left:25px;top:1571px;"><b class="w">2</b><b class="w">0</b><b class="w">1</b><b class="w">5</b><b class="w"><b class="n" style="width:12.5px;margin-left:-0.25px;transform:scaleX(.8)">&#8211;</b></b><b class="w">0</b><b class="w">1</b><b class="w"><b class="n" style="width:12.5px;margin-left:-0.25px;transform:scaleX(.8)">&#8211;</b></b><b class="w">0</b><b class="w">5</b><b class="w"><b class="n" style="width:15.27px;margin-left:-1.64px;transform:scaleX(0.753)">T</b></b><b class="w">0</b><b class="w">0</b><b class="w">:</b><b class="w">0</b><b class="w">0</b><b class="w">:</b><b class="w">0</b><b class="w">0</b><b class="w">.</b><b class="w">0</b><b class="w">0</b><b class="w">0</b><b class="w">0</b><b class="w">0</b><b class="w">0</b></div>
<div class="ss" style="left:389px;top:1571px;"><b class="w">9</b><b class="w">1</b></div>
<div class="ss" style="left:525px;top:1571px;"><b class="w">1</b><b class="w">3</b><b class="w">.</b><b class="w">6</b><b class="w">5</b></div>
<div class="ss" style="left:673px;top:1571px;"><b class="w">7</b></div>
<div class="ss" style="left:737px;top:1571px;"><b class="w">d</b><b class="w">e</b><b class="w">v</b><b class="w">_</b><b class="w">3</b></div>
</body></html>
